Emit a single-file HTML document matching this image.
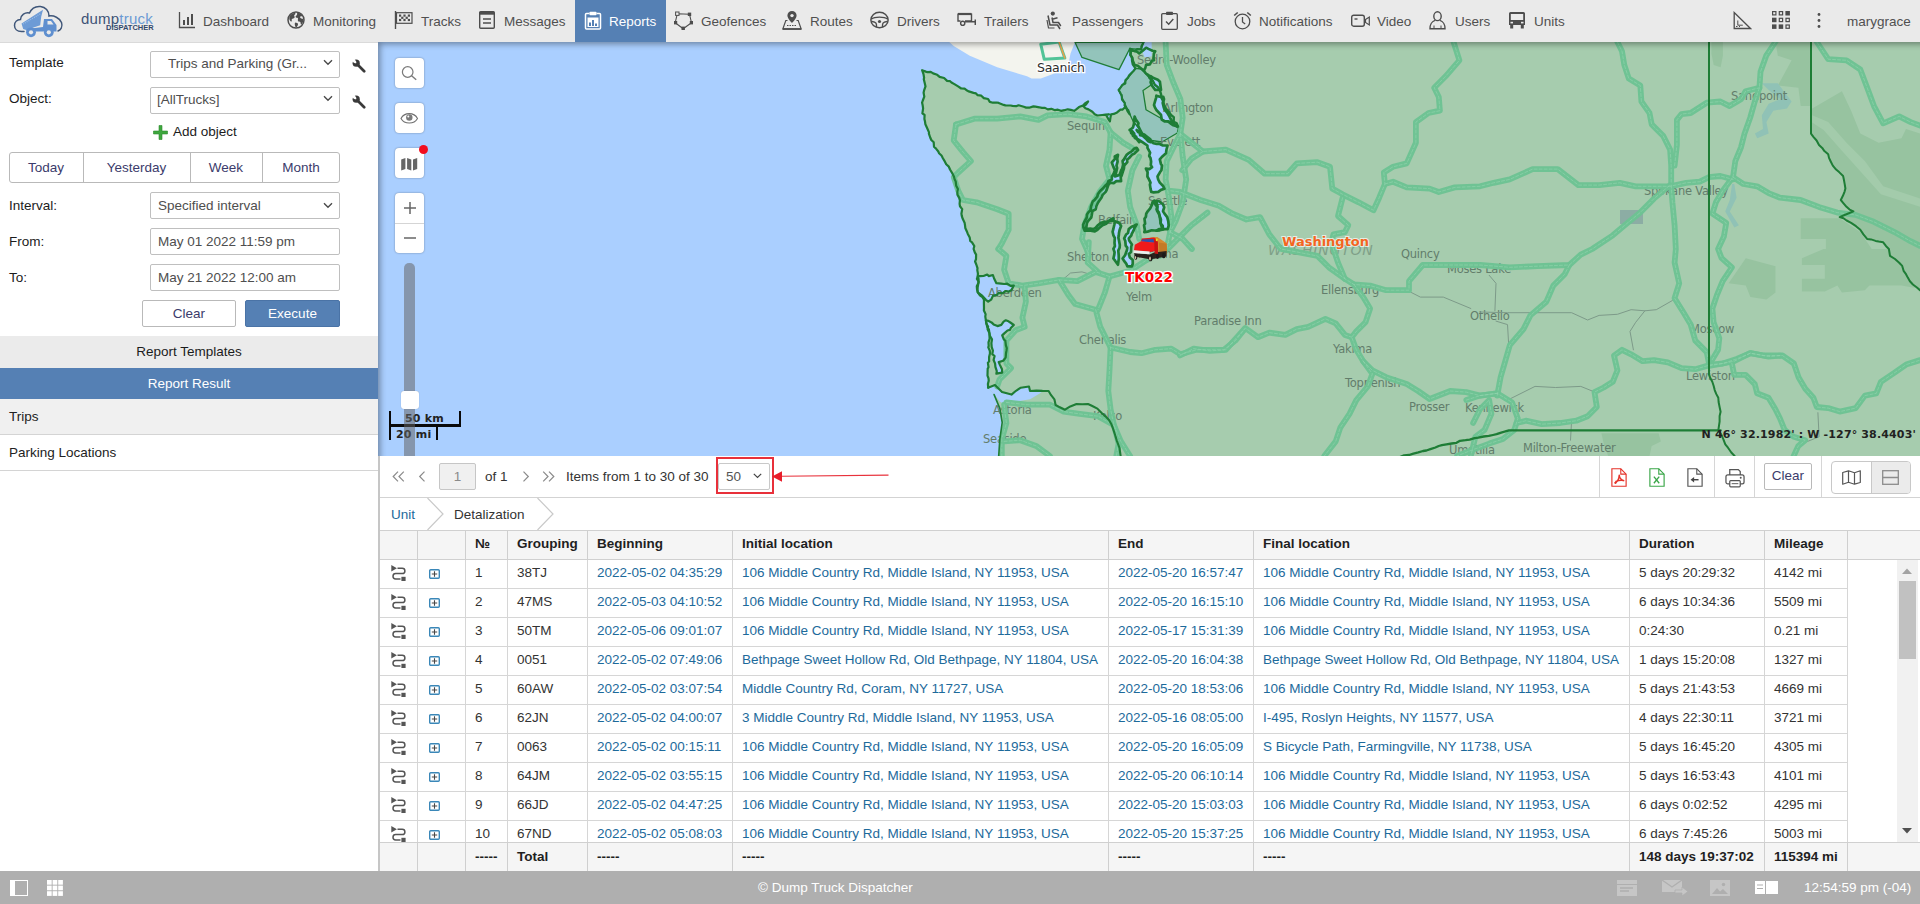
<!DOCTYPE html>
<html lang="en">
<head>
<meta charset="utf-8">
<title>Dump Truck Dispatcher</title>
<style>
*{box-sizing:border-box;margin:0;padding:0}
html,body{width:1920px;height:904px;overflow:hidden;background:#fff}
body{font-family:"Liberation Sans",sans-serif;font-size:13.5px;color:#252525;position:relative}
.a{position:absolute}
svg{display:block}
/* top nav */
#nav{position:absolute;left:0;top:0;width:1920px;height:42px;background:#eaeaea;z-index:20}
#nav .t{position:absolute;top:0;height:42px;line-height:43px;color:#505050;font-size:13.5px;white-space:nowrap}
#nav .i{position:absolute;top:11px}
#nav .act{position:absolute;left:575px;top:0;width:91px;height:42px;background:#5580b4}
/* left panel */
#left{position:absolute;left:0;top:42px;width:378px;height:829px;background:#fff;border-top:1px solid #dadada}
#vline{position:absolute;left:378px;top:456px;width:2px;height:415px;background:#c6c6c6;z-index:5}
.lbl{position:absolute;left:9px;font-size:13.5px;color:#1c1c1c;line-height:16px}
.sel{position:absolute;left:150px;width:190px;height:27px;border:1px solid #bfbfbf;border-radius:2px;background:#fff;font-size:13.5px;color:#4e4e4e;line-height:24px;white-space:nowrap;overflow:hidden}
.chev{position:absolute;left:172px;top:8px}
.btn{position:absolute;border:1px solid #b9b9b9;border-radius:2px;background:#fff;color:#3b3b6b;text-align:center;font-size:13.5px}
/* map */
#map{position:absolute;left:378px;top:42px;width:1542px;height:414px;background:#aacfff;overflow:hidden}
.mbtn{position:absolute;left:17px;width:29px;height:30px;background:#fff;border-radius:4px;box-shadow:0 0 2px rgba(0,0,0,.4)}
.ml{font-family:"DejaVu Sans","Liberation Sans",sans-serif;font-size:11.5px;letter-spacing:-.25px;fill:#627d6b}
/* toolbar */
#tb{position:absolute;left:379px;top:456px;width:1541px;height:42px;background:#fff;border-bottom:1px solid #d3d3d3}
#tb .v{position:absolute;top:0;width:1px;height:41px;background:#d6d6d6}
#tb .t{position:absolute;top:0;line-height:42px;color:#333;white-space:nowrap}
/* breadcrumb */
#crumb{position:absolute;left:379px;top:498px;width:1541px;height:32px;background:#fff}
/* table */
#grid{position:absolute;left:379px;top:530px;width:1541px;height:341px;overflow:hidden;background:#fff}
.r{position:absolute;left:0;width:1469px;height:29px;border-bottom:1px solid #d6d6d6;border-left:1px solid #d6d6d6}
.c{position:absolute;top:0;height:29px;border-right:1px solid #d6d6d6;line-height:26px;white-space:nowrap;overflow:hidden;font-size:13.5px;color:#333;padding-left:9px}
.lk{color:#1d6a9b}
.hd{position:absolute;left:0;top:0;width:1541px;height:30px;background:#f5f5f5;border-top:1px solid #d0d0d0;border-bottom:1px solid #d0d0d0;border-left:1px solid #d0d0d0}
.hd .c,.ft .c{font-weight:bold;color:#1f1f1f;height:28px;line-height:27px;border-right:1px solid #cfcfcf}
.hd .c{line-height:26px;height:28px}
.ft{position:absolute;left:0;top:312px;width:1541px;height:29px;background:#f5f5f5;border-top:1px solid #d0d0d0;border-left:1px solid #d0d0d0}
#foot{position:absolute;left:0;top:871px;width:1920px;height:33px;background:#afafaf;color:#fff;font-size:13.5px}
</style>
</head>
<body>
<div id="nav"><div class="act"></div>
<svg class="a" style="left:13px;top:4px" width="52" height="36" viewBox="13 4 52 36">
<path d="M24 31.500h-2.500c-4.500 0-7-2.800-7-6 0-3.300 2.500-5.800 6-6 .3-4.500 4.500-7.500 9-6.500 2-4.500 6-7 11-6.500 5 .6 8.500 4.500 8.500 9.500 5-.8 10.500 2 12.500 6.500 1.500 4.500-1 7.500-3.500 8.500" fill="none" stroke="#3f5679" stroke-width="1.500" stroke-linecap="round"/>
<path d="M21.500 23.500L43 9.800l-1.800 7-1 8.500-14 4.700-3-1z" fill="#6d9bd6"/>
<path d="M23 24l18-10.500" stroke="#9bbce6" stroke-width="1.300" stroke-dasharray="1 1.100"/>
<path d="M44 19h8l4.500 6v6.500H26.500v-2.500L43 27z" fill="#5f8fcf"/>
<path d="M47.500 21h3.500l2.500 3.500h-6z" fill="#eaeaea"/>
<circle cx="31" cy="32.300" r="4.900" fill="#5f8fcf"/><circle cx="31" cy="32.300" r="2.100" fill="#eaeaea"/>
<circle cx="48.800" cy="32.300" r="4.900" fill="#5f8fcf"/><circle cx="48.800" cy="32.300" r="2.100" fill="#eaeaea"/>
</svg>
<div class="a" style="left:81px;top:9px;font-size:15px;line-height:20px;letter-spacing:.2px;color:#3e5377">dump<span style="color:#6a9ad4">truck</span></div>
<div class="a" style="left:106px;top:24px;font-size:7.500px;line-height:8px;font-weight:bold;color:#33486b">DISPATCHER</div>
<div class="i" style="left:178px;top:11px"><svg width="18" height="18" viewBox="0 0 18 18"><path d="M1.5 1v15.5H17" fill="none" stroke="#4d4d4d" stroke-width="1.3"/><rect x="5" y="9" width="2" height="5" fill="#4d4d4d"/><rect x="9" y="6" width="2" height="8" fill="#4d4d4d"/><rect x="13" y="3" width="2" height="11" fill="#4d4d4d"/></svg></div><div class="t" style="left:203px">Dashboard</div>
<div class="i" style="left:287px;top:11px"><svg width="18" height="18" viewBox="0 0 18 18"><circle cx="9" cy="9" r="8" fill="none" stroke="#4d4d4d" stroke-width="1.500"/><path d="M2.500 5.500C3.500 3.500 5.500 2 8 1.800c.8.700.3 1.700-.7 2.200-.5 1 .8 1.500.2 2.700-.7 1-2 .6-2.700 1.500-.5.900.6 1.800-.3 2.300C3 10.500 1.800 8 2.500 5.500zM10.500 1.500c2 .3 4 1.700 5 3.700-.800.300-1.700-.200-2.300.500-.500.800.500 1.500 1.200 1.800.800.300 1.700 0 2 .800.200 2-.700 4-2.200 5.400-.800-.600-.300-1.800-.900-2.600-.600-.700-1.800-.400-2.300-1.200-.500-1 .500-2-.200-2.800-.600-.700-1.800-.300-2.200-1.200-.300-1.200 1.200-1.500 1.500-2.500.200-.700-.300-1.300.400-1.900zM8.500 11.500c1 .200 2.300.500 2.500 1.500.200 1.200-.800 2.200-1.500 3.200-1 .200-1.300-1-1.500-1.800-.300-1-.500-2.200.500-2.900z" fill="#4d4d4d"/></svg></div><div class="t" style="left:313px">Monitoring</div>
<div class="i" style="left:394px;top:11px"><svg width="19" height="18" viewBox="0 0 19 18"><path d="M1.500 0v18" stroke="#4d4d4d" stroke-width="1.400"/><rect x="2.500" y="1.700" width="15.500" height="10.600" fill="none" stroke="#4d4d4d" stroke-width="1.200"/><g fill="#4d4d4d"><rect x="5" y="3.500" width="2.200" height="2.200"/><rect x="9.400" y="3.500" width="2.200" height="2.200"/><rect x="13.800" y="3.500" width="2.200" height="2.200"/><rect x="7.200" y="5.700" width="2.200" height="2.200"/><rect x="11.600" y="5.700" width="2.200" height="2.200"/><rect x="5" y="7.900" width="2.200" height="2.200"/><rect x="9.400" y="7.900" width="2.200" height="2.200"/><rect x="13.800" y="7.900" width="2.200" height="2.200"/></g></svg></div><div class="t" style="left:421px">Tracks</div>
<div class="i" style="left:479px;top:11px"><svg width="16" height="18" viewBox="0 0 16 18"><rect x=".7" y=".7" width="14.600" height="16.600" rx="1" fill="none" stroke="#4d4d4d" stroke-width="1.400"/><rect x=".7" y=".7" width="14.600" height="3" fill="#4d4d4d"/><path d="M4 8h8M4 12h8" stroke="#4d4d4d" stroke-width="1.300"/></svg></div><div class="t" style="left:504px">Messages</div>
<div class="i" style="left:584px;top:11px"><svg width="18" height="19" viewBox="0 0 18 19"><path d="M5.500 2.500h-3a1 1 0 0 0-1 1v13.500a1 1 0 0 0 1 1h13a1 1 0 0 0 1-1V3.500a1 1 0 0 0-1-1h-3" fill="none" stroke="#fff" stroke-width="1.500"/><rect x="5.500" y=".7" width="7" height="3.600" rx=".8" fill="#fff"/><rect x="3.500" y="6.500" width="11" height="9.500" fill="#fff"/><rect x="5" y="11.500" width="2" height="3.500" fill="#5580b4"/><rect x="8" y="9" width="2" height="6" fill="#5580b4"/><rect x="11" y="12.500" width="2" height="2.500" fill="#5580b4"/></svg></div><div class="t" style="left:609px;color:#fff">Reports</div>
<div class="i" style="left:674px;top:11px"><svg width="19" height="19" viewBox="0 0 19 19"><path d="M3.300 2.700L15.500 3.300l2 8.400-8.300 6-8-6z" fill="none" stroke="#4d4d4d" stroke-width="1.100"/><g fill="#4d4d4d"><rect x="13.800" y="1.600" width="3.400" height="3.400"/><rect x="15.800" y="10" width="3.200" height="3.400"/><rect x="7.500" y="15.600" width="3.400" height="3.400"/><rect x="0" y="10" width="3.200" height="3.400"/></g><rect x="1.600" y="1" width="3.400" height="3.400" fill="#eaeaea" stroke="#4d4d4d" stroke-width="1"/></svg></div><div class="t" style="left:701px">Geofences</div>
<div class="i" style="left:782px;top:11px"><svg width="20" height="19" viewBox="0 0 20 19"><path d="M10 0a4.600 4.600 0 0 0-4.600 4.600c0 3.200 4.600 7.400 4.600 7.400s4.600-4.200 4.600-7.400A4.600 4.600 0 0 0 10 0z" fill="#4d4d4d"/><circle cx="10" cy="4.600" r="1.700" fill="#eaeaea"/><path d="M5.500 9.500H3.800L.8 18h18.400l-3-8.500h-1.700" fill="none" stroke="#4d4d4d" stroke-width="1.200"/><path d="M.8 18h18.400" stroke="#4d4d4d" stroke-width="1.800"/><path d="M5 14.500h10" stroke="#4d4d4d" stroke-width="1" stroke-dasharray="1.500 1"/></svg></div><div class="t" style="left:810px">Routes</div>
<div class="i" style="left:870px;top:11px"><svg width="19" height="18" viewBox="0 0 19 18"><ellipse cx="9.500" cy="9" rx="8.600" ry="7.800" fill="none" stroke="#4d4d4d" stroke-width="1.500"/><path d="M1.500 8c3-2.500 13-2.500 16 0M6.500 16c0-3 .5-5-4.500-5.500M12.500 16c0-3-.5-5 4.500-5.500" fill="none" stroke="#4d4d4d" stroke-width="1.400"/><circle cx="9.500" cy="10.500" r="1.600" fill="#4d4d4d"/></svg></div><div class="t" style="left:897px">Drivers</div>
<div class="i" style="left:957px;top:11px"><svg width="19" height="18" viewBox="0 0 19 18"><path d="M1 3h13.500" stroke="#4d4d4d" stroke-width="2.200"/><path d="M1 2.500v7.500h2.500M8 10h6.500V2.500" fill="none" stroke="#4d4d4d" stroke-width="1.400"/><circle cx="5.700" cy="12.300" r="2.100" fill="none" stroke="#4d4d4d" stroke-width="1.400"/><path d="M8 10.700h10M18.300 8.500v5.500" stroke="#4d4d4d" stroke-width="1.500" fill="none"/></svg></div><div class="t" style="left:984px">Trailers</div>
<div class="i" style="left:1046px;top:11px"><svg width="18" height="19" viewBox="0 0 18 19"><circle cx="6.800" cy="2.600" r="2.100" fill="#4d4d4d"/><path d="M2 4.500l2 9.500h7.500l2.500 4M6 6.500l1 5h5.500l2.300 3.500" fill="none" stroke="#4d4d4d" stroke-width="1.500" stroke-linejoin="round"/><path d="M7 8l4.500-1.200" stroke="#4d4d4d" stroke-width="1.400"/><path d="M1 9l1.500 8h6" fill="none" stroke="#4d4d4d" stroke-width="1.200"/></svg></div><div class="t" style="left:1072px">Passengers</div>
<div class="i" style="left:1161px;top:11px"><svg width="17" height="19" viewBox="0 0 17 19"><path d="M5 2.700H1.700a1 1 0 0 0-1 1v13.600a1 1 0 0 0 1 1h13.600a1 1 0 0 0 1-1V3.700a1 1 0 0 0-1-1H12" fill="none" stroke="#4d4d4d" stroke-width="1.300"/><rect x="5" y=".8" width="7" height="3.200" rx=".7" fill="#4d4d4d"/><path d="M5 10.500l2.700 2.800 4.600-5.300" fill="none" stroke="#4d4d4d" stroke-width="1.400"/></svg></div><div class="t" style="left:1187px">Jobs</div>
<div class="i" style="left:1233px;top:11px"><svg width="19" height="19" viewBox="0 0 19 19"><circle cx="9.500" cy="10.500" r="7.300" fill="none" stroke="#4d4d4d" stroke-width="1.300"/><path d="M9.500 6v5l2.700 2" fill="none" stroke="#4d4d4d" stroke-width="1.300"/><path d="M1.200 4.500L4.700 1.500M17.800 4.500L14.300 1.500" stroke="#4d4d4d" stroke-width="1.600"/></svg></div><div class="t" style="left:1259px">Notifications</div>
<div class="i" style="left:1351px;top:14px"><svg width="19" height="14" viewBox="0 0 19 14"><rect x=".7" y="1.200" width="12.600" height="11" rx="2" fill="none" stroke="#4d4d4d" stroke-width="1.400"/><path d="M14.500 5.500l3.800-2.500v8l-3.800-2.500z" fill="none" stroke="#4d4d4d" stroke-width="1.200"/><path d="M3.500 5h3" stroke="#4d4d4d" stroke-width="1.400"/></svg></div><div class="t" style="left:1377px">Video</div>
<div class="i" style="left:1429px;top:11px"><svg width="17" height="19" viewBox="0 0 17 19"><ellipse cx="8.500" cy="5.200" rx="3.700" ry="4.400" fill="none" stroke="#4d4d4d" stroke-width="1.400"/><path d="M6 9.300C3 10.500 1 12 1 17.800h15c0-5.800-2-7.300-5-8.500" fill="none" stroke="#4d4d4d" stroke-width="1.400"/><path d="M5 18v-3.500M12 18v-3.500" stroke="#4d4d4d" stroke-width="1"/></svg></div><div class="t" style="left:1455px">Users</div>
<div class="i" style="left:1508px;top:11px"><svg width="18" height="18" viewBox="0 0 18 18"><path d="M2.500 1h13a1.500 1.500 0 0 1 1.500 1.500V14H1V2.500A1.500 1.500 0 0 1 2.500 1z" fill="#4d4d4d"/><rect x="2.800" y="3" width="12.400" height="6" fill="#eaeaea"/><rect x="2.200" y="14" width="3" height="3.500" fill="#4d4d4d"/><rect x="12.800" y="14" width="3" height="3.500" fill="#4d4d4d"/><rect x="2.500" y="10.800" width="2.500" height="1.600" fill="#eaeaea"/><rect x="13" y="10.800" width="2.500" height="1.600" fill="#eaeaea"/></svg></div><div class="t" style="left:1534px">Units</div>
<div class="i" style="left:1733px;top:11px"><svg width="19" height="19" viewBox="0 0 19 19"><path d="M1.200 1.500v16h16.300z" fill="none" stroke="#4d4d4d" stroke-width="1.300"/><path d="M4.800 9.500v4.700h5" fill="none" stroke="#4d4d4d" stroke-width="1"/><path d="M3 15.500h1.500M6 15.500h1" stroke="#4d4d4d" stroke-width="1"/></svg></div>
<div class="i" style="left:1772px;top:11px"><svg width="18" height="18" viewBox="0 0 18 18"><rect x="0" y="0" width="4.500" height="4.500" fill="#4d4d4d"/><rect x="0" y="6.7" width="4.500" height="4.500" fill="#4d4d4d"/><rect x="0" y="13.4" width="4.500" height="4.500" fill="#4d4d4d"/><rect x="6.7" y="0" width="4.500" height="4.500" fill="#4d4d4d"/><rect x="6.7" y="6.7" width="4.500" height="4.500" fill="#4d4d4d"/><rect x="6.7" y="13.4" width="4.500" height="4.500" fill="#4d4d4d"/><rect x="13.4" y="0" width="4.500" height="4.500" fill="#4d4d4d"/><rect x="13.4" y="6.7" width="4.500" height="4.500" fill="#4d4d4d"/><rect x="13.4" y="13.4" width="4.500" height="4.500" fill="#4d4d4d"/><rect x="1.2" y="1.2" width="2.100" height="2.100" fill="#eaeaea"/><rect x="7.9" y="1.2" width="2.100" height="2.100" fill="#eaeaea"/><rect x="7.9" y="7.9" width="2.100" height="2.100" fill="#eaeaea"/><rect x="14.6" y="7.9" width="2.100" height="2.100" fill="#eaeaea"/><rect x="14.6" y="14.6" width="2.100" height="2.100" fill="#eaeaea"/></svg></div>
<div class="i" style="left:1817px;top:12px"><svg width="4" height="18" viewBox="0 0 4 18"><circle cx="2" cy="2.500" r="1.400" fill="#4d4d4d"/><circle cx="2" cy="8.500" r="1.400" fill="#4d4d4d"/><circle cx="2" cy="14.500" r="1.400" fill="#4d4d4d"/></svg></div>
<div class="t" style="left:1847px">marygrace</div>
</div>
<div id="left">
<div class="lbl" style="top:12px">Template</div>
<div class="sel" style="top:8px;padding-left:17px">Trips and Parking (Gr...<svg class="chev" style="top:7px" width="10" height="7" viewBox="0 0 10 7"><path d="M1 1.200l4 4 4-4" fill="none" stroke="#4a4a4a" stroke-width="1.400"/></svg></div>
<div class="a" style="left:352px;top:16px"><svg width="14" height="14" viewBox="0 0 14 14"><path d="M4.500 4.500l7.700 7.700" stroke="#3a3a3a" stroke-width="2.700" stroke-linecap="round"/><circle cx="4.200" cy="4.200" r="3.600" fill="#3a3a3a"/><path d="M4.300 4.300L-1 2.200V-1h3.200z" fill="#fff"/><path d="M3.300 1.200l1.200 2.100-1.100 1.200-2.200-1.200" fill="#fff"/></svg></div>
<div class="lbl" style="top:48px">Object:</div>
<div class="sel" style="top:44px;padding-left:6px">[AllTrucks]<svg class="chev" style="top:7px" width="10" height="7" viewBox="0 0 10 7"><path d="M1 1.200l4 4 4-4" fill="none" stroke="#4a4a4a" stroke-width="1.400"/></svg></div>
<div class="a" style="left:352px;top:52px"><svg width="14" height="14" viewBox="0 0 14 14"><path d="M4.500 4.500l7.700 7.700" stroke="#3a3a3a" stroke-width="2.700" stroke-linecap="round"/><circle cx="4.200" cy="4.200" r="3.600" fill="#3a3a3a"/><path d="M4.300 4.300L-1 2.200V-1h3.200z" fill="#fff"/><path d="M3.300 1.200l1.200 2.100-1.100 1.200-2.200-1.200" fill="#fff"/></svg></div>
<svg class="a" style="left:153px;top:82px" width="15" height="15" viewBox="0 0 15 15"><path d="M6 .5h3v5.500h5.500v3H9v5.500H6V9H.5V6H6z" fill="#3ea73e" stroke="#2d8a2d" stroke-width=".6"/></svg>
<div class="a" style="left:173px;top:81px;line-height:16px;color:#1c1c1c">Add object</div>
<div class="btn" style="left:9px;top:109px;width:331px;height:31px;border-radius:3px"></div>
<div class="a" style="left:9px;top:109px;width:74px;height:31px;line-height:31px;text-align:center;color:#3b3b6b">Today</div>
<div class="a" style="left:83px;top:109px;width:107px;height:31px;line-height:31px;text-align:center;color:#3b3b6b">Yesterday</div>
<div class="a" style="left:190px;top:109px;width:72px;height:31px;line-height:31px;text-align:center;color:#3b3b6b">Week</div>
<div class="a" style="left:262px;top:109px;width:78px;height:31px;line-height:31px;text-align:center;color:#3b3b6b">Month</div>
<div class="a" style="left:83px;top:110px;width:1px;height:29px;background:#b9b9b9"></div>
<div class="a" style="left:190px;top:110px;width:1px;height:29px;background:#b9b9b9"></div>
<div class="a" style="left:262px;top:110px;width:1px;height:29px;background:#b9b9b9"></div>
<div class="lbl" style="top:155px">Interval:</div>
<div class="sel" style="top:149px;padding-left:7px;line-height:25px">Specified interval<svg class="chev" style="top:8.5px" width="10" height="7" viewBox="0 0 10 7"><path d="M1 1.200l4 4 4-4" fill="none" stroke="#4a4a4a" stroke-width="1.400"/></svg></div>
<div class="lbl" style="top:191px">From:</div>
<div class="sel" style="top:185px;padding-left:7px;line-height:25px">May 01 2022 11:59 pm</div>
<div class="lbl" style="top:227px">To:</div>
<div class="sel" style="top:221px;padding-left:7px;line-height:25px">May 21 2022 12:00 am</div>
<div class="btn" style="left:142px;top:257px;width:94px;height:27px;line-height:25px">Clear</div>
<div class="btn" style="left:245px;top:257px;width:95px;height:27px;line-height:25px;background:#5580b4;border-color:#4a73a6;color:#fff">Execute</div>
<div class="a" style="left:0;top:293px;width:378px;height:32px;line-height:31px;background:#ebebeb;text-align:center;color:#1c1c1c">Report Templates</div>
<div class="a" style="left:0;top:325px;width:378px;height:31px;line-height:31px;background:#5580b4;text-align:center;color:#fff">Report Result</div>
<div class="a" style="left:0;top:356px;width:378px;height:36px;line-height:36px;background:#f0f0f0;border-bottom:1px solid #d4d4d4;padding-left:9px;color:#222">Trips</div>
<div class="a" style="left:0;top:392px;width:378px;height:36px;line-height:36px;background:#fff;border-bottom:1px solid #d4d4d4;padding-left:9px;color:#222">Parking Locations</div>
</div>
<div id="vline"></div>
<div id="map"><svg class="a" style="left:0;top:0" width="1542" height="414" viewBox="378 42 1542 414"><polygon points="949.2,42.0 953.7,46.1 969.8,55.7 997.2,67.2 1027.0,76.3 1031.6,78.6 1040.8,78.6 1059.1,71.8 1068.2,64.9 1070.5,53.4 1075.1,42.0" fill="#f3f4ee" stroke="none" stroke-width="0" stroke-linejoin="round"/><polygon points="922.1,70.2 937.2,74.8 958.1,86.4 981.3,95.7 992.9,102.7 1016.1,106.2 1039.3,107.3 1057.9,109.7 1074.2,110.8 1088.1,101.5 1083.5,106.2 1097.4,115.5 1109.0,114.3 1106.4,115.5 1109.9,121.3 1111.1,114.3 1125.0,107.3 1129.7,114.3 1118.6,89.9 1135.5,68.4 1132.0,60.9 1130.8,50.4 1141.3,49.3 1143.6,42.3 1143.6,42.0 1920.0,42.0 1920.0,456.0 998.5,456.0 998.7,455.9 999.9,438.8 1002.2,422.5 999.9,408.6 994.1,394.6 988.2,387.7 989.4,333.1 985.9,320.3 982.4,297.1 977.8,292.4 977.8,276.2 974.3,246.0 969.7,237.4 962.7,218.8 959.2,197.9 954.6,179.3 948.8,166.6 938.3,151.5 930.2,137.5 924.4,119.0 922.1,102.7 925.5,86.4 922.1,70.2" fill="#a6ccae" stroke="none" stroke-width="0" stroke-linejoin="round"/><polygon points="1775.5,42.0 1809.9,42.0 1809.9,106.1 1800.7,106.1 1798.4,87.8 1777.8,85.5 1791.6,60.3 1777.8,55.7" fill="#97c3a0" stroke="none" stroke-width="0" stroke-linejoin="round"/><polygon points="1812.2,108.4 1841.9,91.2 1851.1,110.7 1860.3,133.6 1878.6,142.7 1901.5,138.2 1906.0,129.0 1920.0,133.6 1931.2,133.6 1931.2,249.0 1890.0,249.0 1883.2,242.3 1867.1,238.9 1860.3,229.7 1851.1,222.9 1839.7,217.1 1853.4,211.4 1846.5,206.8 1840.8,200.0 1845.4,188.5 1843.1,175.9 1832.8,165.6 1828.2,154.2 1819.0,145.0 1811.0,133.6 1811.0,110.7" fill="#97c3a0" stroke="none" stroke-width="0" stroke-linejoin="round"/><polygon points="1800.7,218.3 1839.7,218.3 1860.3,232.0 1871.7,249.0 1825.9,249.0 1825.9,238.9 1800.7,238.9" fill="#97c3a0" stroke="none" stroke-width="0" stroke-linejoin="round"/><polygon points="1711.4,42.0 1722.9,42.0 1722.9,55.7 1720.6,67.2 1713.7,64.9 1711.4,53.4" fill="#97c3a0" stroke="none" stroke-width="0" stroke-linejoin="round"/><polygon points="1728.6,283.3 1745.8,258.2 1775.5,266.2 1775.5,292.5 1766.4,299.4 1750.4,297.1 1745.8,285.6" fill="#97c3a0" stroke="none" stroke-width="0" stroke-linejoin="round"/><polygon points="1801.9,258.2 1823.6,249.0 1890.0,249.0 1906.0,274.2 1915.2,287.9 1901.5,285.6 1869.4,285.6 1864.8,290.2 1841.9,292.5 1837.4,285.6 1824.8,291.4 1801.9,291.4 1801.9,278.8 1824.8,278.8 1824.8,265.0 1801.9,265.0" fill="#97c3a0" stroke="none" stroke-width="0" stroke-linejoin="round"/><polygon points="1886.6,249.0 1890.0,255.9 1899.2,262.7 1906.0,274.2 1912.9,284.5 1931.2,294.8 1931.2,249.0" fill="#97c3a0" stroke="none" stroke-width="0" stroke-linejoin="round"/><polygon points="1601.4,433.3 1658.6,433.3 1660.9,441.4 1651.7,445.9 1649.5,456.0 1608.2,456.0 1603.7,443.6" fill="#97c3a0" stroke="none" stroke-width="0" stroke-linejoin="round"/><polygon points="1812.2,115.3 1828.2,122.1 1846.5,142.7 1864.8,161.0 1883.2,186.2 1931.2,202.3 1931.2,210.3 1880.9,194.2 1860.3,171.3 1841.9,150.7 1823.6,130.1 1812.2,122.6" fill="#a3cbab" stroke="none" stroke-width="0" stroke-linejoin="round"/><polygon points="1761.8,83.2 1777.8,83.2 1791.6,101.5 1787.0,108.4 1773.3,110.7 1766.4,122.1 1768.7,133.6 1757.2,138.2 1754.9,133.6 1763.0,129.0 1761.8,115.3 1768.7,103.8 1780.1,99.2 1768.7,90.1" fill="#90c2b6" stroke="none" stroke-width="0" stroke-linejoin="round"/><polygon points="1734.3,183.9 1736.6,197.7 1729.8,211.4 1738.9,225.2 1734.3,227.4 1725.2,211.4 1729.8,200.0 1732.1,183.9" fill="#90c2b6" stroke="none" stroke-width="0" stroke-linejoin="round"/><rect x="1620" y="210" width="23" height="14" fill="#8cada4"/><polygon points="977.8,276.2 992.9,275.0 996.4,283.2 1013.8,285.5 1011.5,290.1 992.9,295.9 988.2,301.7 982.4,295.9 977.8,292.4" fill="#aacfff" stroke="none" stroke-width="0" stroke-linejoin="round"/><polygon points="985.9,320.3 997.5,326.1 1005.7,320.3 1013.8,325.0 1002.2,335.4 1006.8,348.2 1005.7,357.5 998.7,362.1 1002.2,372.6 996.4,373.7 992.9,350.5 989.4,333.1" fill="#aacfff" stroke="none" stroke-width="0" stroke-linejoin="round"/><polygon points="988.2,387.7 995.2,385.3 1002.2,392.3 1011.5,394.6 1020.8,387.7 1028.9,386.5 1030.1,391.1 1041.7,392.3 1030.1,399.3 1016.1,401.6 1006.8,406.2 999.9,401.6 994.1,394.6" fill="#aacfff" stroke="none" stroke-width="0" stroke-linejoin="round"/><polygon points="1134.6,116.6 1131.1,132.9 1139.2,142.2 1129.6,130.0 1138.1,139.3 1142.8,142.4 1147.4,145.5 1150.5,157.9 1152.1,167.2 1145.9,168.7 1147.4,176.5 1150.5,182.6 1151.3,191.9 1158.3,191.9 1164.5,188.8 1159.8,182.6 1157.5,176.5 1161.4,170.3 1159.8,159.4 1166.0,153.2 1167.6,145.5 1162.9,145.5 1156.7,143.9 1144.3,134.6 1136.6,130.0 1150.8,142.2 1141.5,132.9" fill="#aacfff" stroke="none" stroke-width="0" stroke-linejoin="round"/><polygon points="1155.9,201.2 1159.8,216.7 1162.9,229.1 1156.7,230.7 1167.6,229.1 1168.3,221.4 1164.5,213.6 1162.9,204.3 1159.0,201.2" fill="#aacfff" stroke="none" stroke-width="0" stroke-linejoin="round"/><polygon points="1138.1,150.1 1131.9,154.8 1124.2,165.6 1121.1,181.1 1110.3,182.6 1105.6,191.9 1097.9,202.8 1091.7,215.2 1087.0,222.9 1085.5,229.1 1093.2,229.1 1101.0,222.9 1113.4,218.3 1113.4,220.6 1102.5,225.2 1094.8,231.4 1084.7,230.7 1083.2,224.5 1088.6,212.1 1094.8,199.7 1102.5,188.8 1111.8,179.6 1114.9,170.3 1111.8,162.5 1118.0,154.8 1116.5,165.6 1114.9,176.5 1119.6,174.9 1122.6,161.0 1128.8,153.2 1136.6,147.8" fill="#aacfff" stroke="none" stroke-width="0" stroke-linejoin="round"/><polygon points="1114.9,221.4 1113.4,235.3 1114.9,246.1 1113.4,258.5 1118.0,264.7 1119.6,247.7 1118.8,235.3 1121.1,226.0" fill="#aacfff" stroke="none" stroke-width="0" stroke-linejoin="round"/><polygon points="1136.6,224.5 1128.8,229.1 1124.2,238.4 1127.3,247.7 1122.6,258.5 1127.3,266.3 1131.9,266.3 1132.7,260.1 1128.8,253.9 1131.9,244.6 1128.8,238.4 1133.5,230.7" fill="#aacfff" stroke="none" stroke-width="0" stroke-linejoin="round"/><polygon points="1150.6,76.0 1159.9,81.8 1161.0,89.9 1155.2,89.9 1151.7,85.3" fill="#aacfff" stroke="none" stroke-width="0" stroke-linejoin="round"/><polygon points="1156.4,95.7 1163.3,96.9 1164.5,109.7 1177.3,125.9 1164.5,121.3 1154.0,105.0" fill="#aacfff" stroke="none" stroke-width="0" stroke-linejoin="round"/><polygon points="1143.6,42.3 1151.7,42.3 1151.7,56.3 1144.8,57.4 1141.3,49.3" fill="#aacfff" stroke="none" stroke-width="0" stroke-linejoin="round"/><polygon points="1154.4,200.5 1145.9,216.7 1144.3,232.2 1156.7,230.7 1162.9,229.1 1159.8,216.7" fill="#93c4bb" stroke="none" stroke-width="0" stroke-linejoin="round"/><polygon points="1075.0,42.3 1082.0,57.4 1119.0,69.6 1129.7,48.7 1141.3,49.3 1143.6,42.3" fill="#93c4bb" stroke="#1e7d36" stroke-width="1.3" stroke-linejoin="round"/><polygon points="1118.6,90.0 1135.5,68.4 1141.3,69.0 1154.0,83.0 1143.0,90.5 1146.0,109.7 1178.4,128.2 1177.3,133.0 1162.0,142.0 1148.0,140.0 1133.0,121.0" fill="#93c4bb" stroke="#1e7d36" stroke-width="1.3" stroke-linejoin="round"/><text class="ml" x="1037" y="72" style="fill:#2d2d2d;font-size:12.5px;paint-order:stroke;stroke:#fff;stroke-width:2.5px">Saanich</text><text class="ml" x="1137" y="64">Sedro-Woolley</text><text class="ml" x="1163" y="112">Arlington</text><text class="ml" x="1067" y="130">Sequim</text><text class="ml" x="1160" y="146">Everett</text><text class="ml" x="1148" y="205">Seattle</text><text class="ml" x="1098" y="224">Belfair</text><text class="ml" x="1067" y="261">Shelton</text><text class="ml" x="1136" y="258">Tacoma</text><text class="ml" x="1126" y="301">Yelm</text><text class="ml" x="988" y="297">Aberdeen</text><text class="ml" x="1079" y="344">Chenalis</text><text class="ml" x="1194" y="325">Paradise Inn</text><text class="ml" x="1321" y="294">Ellensburg</text><text class="ml" x="1333" y="353">Yakima</text><text class="ml" x="1345" y="387">Toppenish</text><text class="ml" x="1401" y="258">Quincy</text><text class="ml" x="1447" y="273">Moses Lake</text><text class="ml" x="1470" y="320">Othello</text><text class="ml" x="1409" y="411">Prosser</text><text class="ml" x="1465" y="412">Kennewick</text><text class="ml" x="1449" y="454">Umatilla</text><text class="ml" x="1523" y="452">Milton-Freewater</text><text class="ml" x="1644" y="195">Spokane Valley</text><text class="ml" x="1731" y="100">Sandpoint</text><text class="ml" x="1690" y="333">Moscow</text><text class="ml" x="1686" y="380">Lewiston</text><text class="ml" x="993" y="414">Astoria</text><text class="ml" x="983" y="443">Seaside</text><text class="ml" x="1093" y="420">Kelso</text><text x="1268" y="255" style="font-family:'DejaVu Sans',sans-serif;font-style:italic;font-size:14px;fill:#7fa088;letter-spacing:.8px">WASHINGTON</text><polyline points="1411.3,292.5 1420.4,297.1 1443.3,297.1 1470.8,308.5" fill="none" stroke="#7d9a89" stroke-width="1" stroke-linejoin="round" stroke-linecap="round" /><polyline points="1480.0,312.0 1507.5,312.7 1571.6,312.7 1587.6,320.0 1599.1,315.4 1617.4,314.3 1631.1,309.7 1644.9,310.8 1656.3,309.7 1672.4,300.5" fill="none" stroke="#7d9a89" stroke-width="1" stroke-linejoin="round" stroke-linecap="round" /><polyline points="1644.9,310.8 1635.7,322.3 1630.0,331.4 1633.4,349.8" fill="none" stroke="#7d9a89" stroke-width="1" stroke-linejoin="round" stroke-linecap="round" /><polyline points="1509.8,399.0 1535.0,386.4 1555.6,387.5 1580.8,386.4 1592.2,391.0" fill="none" stroke="#7d9a89" stroke-width="1" stroke-linejoin="round" stroke-linecap="round" /><polyline points="1489.2,275.3 1496.0,283.3 1494.9,310.8" fill="none" stroke="#7d9a89" stroke-width="1" stroke-linejoin="round" stroke-linecap="round" /><polyline points="1496.0,321.1 1507.5,324.6 1508.6,342.9" fill="none" stroke="#7d9a89" stroke-width="1" stroke-linejoin="round" stroke-linecap="round" /><polyline points="1571.6,420.7 1570.5,440.2" fill="none" stroke="#7d9a89" stroke-width="1" stroke-linejoin="round" stroke-linecap="round" /><polyline points="1817.9,412.7 1819.1,436.8 1807.6,441.4" fill="none" stroke="#7d9a89" stroke-width="1" stroke-linejoin="round" stroke-linecap="round" /><polyline points="1063.7,278.8 1070.5,273.0 1082.0,271.9 1093.4,275.3" fill="none" stroke="#7d9a89" stroke-width="1" stroke-linejoin="round" stroke-linecap="round" /><polyline points="1180.0,133.6 1202.9,151.5 1225.8,149.6 1248.7,159.9 1264.7,173.7 1287.6,173.7 1296.8,163.4 1317.4,162.2 1330.0,166.8 1332.3,188.6 1342.6,194.3 1358.6,202.3 1373.5,210.3 1379.2,197.7 1384.9,184.0 1383.8,172.5 1393.0,166.8 1406.7,163.4 1415.9,142.8 1415.9,122.1 1428.5,113.0 1439.9,110.7 1438.8,97.0 1434.2,87.8 1445.6,76.3 1459.4,60.3 1453.6,42.0" fill="none" stroke="#6dc293" stroke-width="5.8" stroke-linejoin="round" stroke-linecap="round" opacity=".97"/><polyline points="1384.9,184.0 1393.0,181.7 1406.7,187.4 1429.6,188.6 1438.8,192.0 1454.8,187.4 1480.0,186.3 1493.7,182.8 1509.7,179.4 1532.6,169.1 1557.8,169.1 1578.4,185.1 1599.1,185.1 1619.7,182.8 1635.7,186.3 1654.0,186.3 1670.0,186.3 1686.1,182.8 1699.8,181.7 1709.0,177.1 1720.4,176.0 1733.0,179.4" fill="none" stroke="#6dc293" stroke-width="5.8" stroke-linejoin="round" stroke-linecap="round" opacity=".97"/><polyline points="1342.6,197.7 1338.0,216.0 1348.3,225.2 1344.9,232.1 1333.4,234.4 1331.6,241.7 1333.4,249.0" fill="none" stroke="#6dc293" stroke-width="5.8" stroke-linejoin="round" stroke-linecap="round" opacity=".97"/><polyline points="1170.8,190.8 1180.0,192.0 1200.6,200.0 1218.9,205.7 1232.7,213.7 1246.4,219.5 1260.1,217.2 1269.3,234.4 1280.8,249.0 1299.1,252.4 1317.4,255.9 1328.8,267.3 1344.9,278.8 1354.0,284.5 1370.1,285.6 1386.1,290.2 1409.0,290.2 1409.0,281.1 1422.7,265.0 1480.0,265.0 1509.7,267.3 1537.2,266.2 1569.3,265.0 1580.7,254.7 1592.2,249.0 1612.8,235.3 1626.5,223.8 1640.3,212.4 1654.0,198.6 1670.0,185.1" fill="none" stroke="#6dc293" stroke-width="5.8" stroke-linejoin="round" stroke-linecap="round" opacity=".97"/><polyline points="1168.6,248.1 1180.0,236.6 1191.4,225.2 1207.5,212.6" fill="none" stroke="#6dc293" stroke-width="5.8" stroke-linejoin="round" stroke-linecap="round" opacity=".97"/><polyline points="1182.3,170.2 1191.4,158.8 1202.9,151.5" fill="none" stroke="#6dc293" stroke-width="5.8" stroke-linejoin="round" stroke-linecap="round" opacity=".97"/><polyline points="1333.4,249.0 1338.0,262.7 1344.9,278.8" fill="none" stroke="#6dc293" stroke-width="5.8" stroke-linejoin="round" stroke-linecap="round" opacity=".97"/><polyline points="1354.0,284.5 1363.2,297.1 1370.1,308.5 1365.5,322.3 1356.3,331.4 1351.7,337.2 1356.3,349.8 1363.2,361.2 1372.4,370.4 1386.1,377.2 1406.7,384.1 1418.1,391.0 1429.6,399.0 1450.2,391.0 1466.2,392.1 1480.0,395.6 1497.2,393.3" fill="none" stroke="#6dc293" stroke-width="5.8" stroke-linejoin="round" stroke-linecap="round" opacity=".97"/><polyline points="1180.0,355.5 1193.7,348.6 1209.8,350.9 1225.8,349.8 1235.0,339.5 1245.3,328.0 1257.9,337.2 1269.3,332.6 1285.3,334.9 1296.8,329.1 1308.2,326.9 1325.4,318.8 1335.7,323.4 1344.9,334.9 1351.7,337.2" fill="none" stroke="#6dc293" stroke-width="5.8" stroke-linejoin="round" stroke-linecap="round" opacity=".97"/><polyline points="1363.2,361.2 1372.4,373.8 1367.8,386.4 1356.3,400.1 1349.5,413.9 1340.3,427.6 1335.7,441.4 1324.3,456.0" fill="none" stroke="#6dc293" stroke-width="5.8" stroke-linejoin="round" stroke-linecap="round" opacity=".97"/><polyline points="1617.4,42.0 1622.0,51.2 1624.3,64.9 1628.8,78.6 1640.3,85.5 1641.4,101.5 1649.5,113.0 1651.7,124.4 1663.2,135.9 1670.1,149.6 1671.2,165.7 1671.2,184.0" fill="none" stroke="#6dc293" stroke-width="5.8" stroke-linejoin="round" stroke-linecap="round" opacity=".97"/><polyline points="1674.6,165.7 1676.9,145.0 1676.9,119.9 1681.5,114.1 1690.7,113.0 1706.7,102.7 1720.4,101.5 1729.6,106.1 1741.0,99.2 1745.6,91.2 1759.4,87.8" fill="none" stroke="#6dc293" stroke-width="5.8" stroke-linejoin="round" stroke-linecap="round" opacity=".97"/><polyline points="1775.4,42.0 1766.2,55.7 1760.5,71.8 1759.4,87.8 1754.8,101.5 1750.2,117.6 1744.5,133.6 1741.0,147.3 1735.3,161.1 1733.0,177.1 1722.7,190.8 1715.9,202.3 1712.4,213.7 1726.2,222.9 1723.9,236.6 1718.1,249.0 1721.6,258.2 1731.9,267.3 1722.7,281.1 1717.0,294.8 1712.4,308.5 1713.6,322.3 1719.3,338.3 1718.1,349.8 1711.3,361.2" fill="none" stroke="#6dc293" stroke-width="5.8" stroke-linejoin="round" stroke-linecap="round" opacity=".97"/><polyline points="1733.0,177.1 1743.3,184.0 1757.1,186.3 1768.5,193.1 1780.0,197.7 1800.6,200.0 1818.9,206.9 1837.2,212.6 1855.5,214.9 1873.9,221.8 1894.5,232.1 1910.5,241.2 1919.9,245.8" fill="none" stroke="#6dc293" stroke-width="5.8" stroke-linejoin="round" stroke-linecap="round" opacity=".97"/><polyline points="1671.2,185.1 1672.4,202.3 1674.6,225.2 1675.8,249.0 1674.6,262.7 1679.2,283.4 1674.6,298.2 1683.8,313.1 1690.7,324.6 1695.3,340.6 1706.7,352.1 1709.0,363.5" fill="none" stroke="#6dc293" stroke-width="5.8" stroke-linejoin="round" stroke-linecap="round" opacity=".97"/><polyline points="1569.3,265.0 1564.7,274.2 1553.3,285.6 1546.4,301.7 1530.4,315.4 1523.5,329.1 1509.8,345.2 1505.2,361.2 1500.6,377.2 1497.2,395.6" fill="none" stroke="#6dc293" stroke-width="5.8" stroke-linejoin="round" stroke-linecap="round" opacity=".97"/><polyline points="1780.0,355.5 1763.9,355.5 1750.2,353.2 1734.2,361.2 1722.7,363.5 1711.3,364.6 1695.3,369.2 1681.5,368.1 1667.8,362.4 1654.0,360.1 1642.6,361.2 1631.1,354.3 1622.0,349.8 1614.0,355.5 1617.4,370.4 1612.8,381.8 1603.7,387.5 1594.5,392.1 1596.8,407.0 1587.6,416.2 1576.2,420.7 1560.1,423.0 1541.8,424.2 1525.8,420.7 1516.6,423.0" fill="none" stroke="#6dc293" stroke-width="5.8" stroke-linejoin="round" stroke-linecap="round" opacity=".97"/><polyline points="1731.9,363.5 1734.2,374.9 1745.6,374.9 1754.8,384.1 1757.1,393.3 1768.5,397.8 1775.4,409.3 1780.0,418.5 1784.6,429.9 1793.7,436.8 1805.2,440.2 1798.3,445.9 1793.7,456.0" fill="none" stroke="#6dc293" stroke-width="5.8" stroke-linejoin="round" stroke-linecap="round" opacity=".97"/><polyline points="1466.3,400.1 1480.0,395.6 1497.2,393.3 1512.1,402.4 1517.8,418.5 1514.3,429.9 1502.9,439.1 1489.2,443.6 1470.8,450.5 1457.1,456.0" fill="none" stroke="#6dc293" stroke-width="5.8" stroke-linejoin="round" stroke-linecap="round" opacity=".97"/><polyline points="1473.1,423.0 1480.0,409.3 1489.2,400.1 1491.4,413.9 1484.6,429.9 1475.4,436.8 1470.8,456.0" fill="none" stroke="#6dc293" stroke-width="5.8" stroke-linejoin="round" stroke-linecap="round" opacity=".97"/><polyline points="1816.8,42.0 1828.2,59.2 1846.6,60.3 1860.3,69.5 1867.2,87.8 1874.0,106.1 1883.2,123.3 1899.2,116.4 1910.7,122.1 1920.1,125.6" fill="none" stroke="#6dc293" stroke-width="5.8" stroke-linejoin="round" stroke-linecap="round" opacity=".97"/><polyline points="1709.2,365.8 1722.9,363.5 1736.6,358.9 1750.4,353.2 1768.7,356.6 1782.4,355.5 1793.9,363.5 1798.5,377.2 1805.3,388.7 1813.4,397.8 1816.8,407.0 1828.2,408.1 1839.7,411.6 1855.7,408.1 1864.9,395.6 1876.3,393.3 1880.9,381.8 1894.6,372.7 1906.1,364.6 1920.1,360.1" fill="none" stroke="#6dc293" stroke-width="5.8" stroke-linejoin="round" stroke-linecap="round" opacity=".97"/><polyline points="998.4,249.0 1006.4,255.9 1004.1,269.6 1008.7,283.3 1022.4,285.6 1038.5,283.3 1059.1,279.9 1068.2,294.8 1075.1,304.0 1095.7,309.7 1100.3,326.9 1110.6,347.5 1109.5,370.4 1108.3,391.0 1110.6,409.3 1114.0,425.3 1120.9,441.4 1130.1,456.0" fill="none" stroke="#6dc293" stroke-width="5.8" stroke-linejoin="round" stroke-linecap="round" opacity=".97"/><polyline points="1059.1,279.9 1077.4,281.1 1095.7,271.9 1109.5,276.5 1130.1,270.8 1146.1,260.4 1157.5,253.6 1169.0,242.1" fill="none" stroke="#6dc293" stroke-width="5.8" stroke-linejoin="round" stroke-linecap="round" opacity=".97"/><polyline points="1109.5,276.5 1104.9,292.5 1098.0,309.7" fill="none" stroke="#6dc293" stroke-width="5.8" stroke-linejoin="round" stroke-linecap="round" opacity=".97"/><polyline points="1110.6,347.5 1130.1,352.0 1141.5,353.2 1155.3,349.8 1171.3,348.6 1180.4,354.3 1196.5,349.8 1223.9,349.8 1235.4,340.6 1244.6,329.1" fill="none" stroke="#6dc293" stroke-width="5.8" stroke-linejoin="round" stroke-linecap="round" opacity=".97"/><polyline points="1024.7,286.8 1025.9,301.7 1022.4,317.7 1024.7,326.9 1015.6,330.3 1006.4,340.6 1006.4,363.5 1011.0,368.1 999.5,379.5 997.2,386.4" fill="none" stroke="#6dc293" stroke-width="5.8" stroke-linejoin="round" stroke-linecap="round" opacity=".97"/><polyline points="1006.4,402.4 1027.0,404.7 1049.9,404.7 1063.7,411.6 1079.7,413.9 1098.0,416.2 1114.0,425.3 1118.6,443.6 1116.3,456.0" fill="none" stroke="#6dc293" stroke-width="5.8" stroke-linejoin="round" stroke-linecap="round" opacity=".97"/><polyline points="1004.1,404.7 1006.4,423.0 1001.8,439.1 1001.8,456.0" fill="none" stroke="#6dc293" stroke-width="5.8" stroke-linejoin="round" stroke-linecap="round" opacity=".97"/><polyline points="1004.1,441.4 1020.1,440.2 1036.2,445.9 1049.9,456.0" fill="none" stroke="#6dc293" stroke-width="5.8" stroke-linejoin="round" stroke-linecap="round" opacity=".97"/><polyline points="1088.8,242.1 1087.7,262.7 1098.0,271.9" fill="none" stroke="#6dc293" stroke-width="5.8" stroke-linejoin="round" stroke-linecap="round" opacity=".97"/><polyline points="956.0,124.4 974.3,118.7 997.2,118.7 1020.1,116.4 1038.5,119.9 1047.6,115.3 1068.2,114.1 1086.6,116.4 1104.9,122.1 1110.6,132.5 1109.5,149.6 1106.0,165.7 1109.5,179.4 1100.3,190.8 1091.1,206.9 1084.3,225.2 1082.0,238.9 1086.6,249.0 1088.8,255.9" fill="none" stroke="#6dc293" stroke-width="5.8" stroke-linejoin="round" stroke-linecap="round" opacity=".97"/><polyline points="956.0,124.4 953.7,140.5 962.9,151.9 970.9,161.1 958.3,172.5 953.7,177.1 958.3,190.8 962.9,200.0 976.6,202.3 997.2,209.2 1008.7,213.7 1008.7,229.8 1001.8,243.5 998.4,249.0" fill="none" stroke="#6dc293" stroke-width="5.8" stroke-linejoin="round" stroke-linecap="round" opacity=".97"/><polyline points="1110.6,132.5 1123.2,142.8 1134.6,149.6" fill="none" stroke="#6dc293" stroke-width="5.8" stroke-linejoin="round" stroke-linecap="round" opacity=".97"/><polyline points="1139.2,156.5 1132.4,170.2 1127.8,190.8 1130.1,206.9 1136.9,225.2 1139.2,238.9" fill="none" stroke="#6dc293" stroke-width="5.8" stroke-linejoin="round" stroke-linecap="round" opacity=".97"/><polyline points="1165.6,42.0 1166.7,64.9 1173.6,83.2 1180.4,99.2 1182.7,117.6 1180.4,133.6 1173.6,147.3 1166.7,161.1 1165.6,179.4 1169.0,197.7 1171.3,216.0 1170.1,232.1 1166.7,249.0 1159.8,255.9" fill="none" stroke="#6dc293" stroke-width="5.8" stroke-linejoin="round" stroke-linecap="round" opacity=".97"/><polyline points="1180.4,133.6 1182.7,156.5 1186.2,179.4 1182.7,202.3 1175.9,220.6 1170.1,232.1" fill="none" stroke="#6dc293" stroke-width="5.8" stroke-linejoin="round" stroke-linecap="round" opacity=".97"/><polyline points="1170.1,232.1 1182.7,238.9 1191.9,249.0" fill="none" stroke="#6dc293" stroke-width="5.8" stroke-linejoin="round" stroke-linecap="round" opacity=".97"/><polyline points="1180.0,133.6 1202.9,151.5 1225.8,149.6 1248.7,159.9 1264.7,173.7 1287.6,173.7 1296.8,163.4 1317.4,162.2 1330.0,166.8 1332.3,188.6 1342.6,194.3 1358.6,202.3 1373.5,210.3 1379.2,197.7 1384.9,184.0 1383.8,172.5 1393.0,166.8 1406.7,163.4 1415.9,142.8 1415.9,122.1 1428.5,113.0 1439.9,110.7 1438.8,97.0 1434.2,87.8 1445.6,76.3 1459.4,60.3 1453.6,42.0" fill="none" stroke="#93d4ad" stroke-width="0.9" stroke-linejoin="round" stroke-linecap="round" opacity=".7" stroke-dasharray="3 2"/><polyline points="1384.9,184.0 1393.0,181.7 1406.7,187.4 1429.6,188.6 1438.8,192.0 1454.8,187.4 1480.0,186.3 1493.7,182.8 1509.7,179.4 1532.6,169.1 1557.8,169.1 1578.4,185.1 1599.1,185.1 1619.7,182.8 1635.7,186.3 1654.0,186.3 1670.0,186.3 1686.1,182.8 1699.8,181.7 1709.0,177.1 1720.4,176.0 1733.0,179.4" fill="none" stroke="#93d4ad" stroke-width="0.9" stroke-linejoin="round" stroke-linecap="round" opacity=".7" stroke-dasharray="3 2"/><polyline points="1342.6,197.7 1338.0,216.0 1348.3,225.2 1344.9,232.1 1333.4,234.4 1331.6,241.7 1333.4,249.0" fill="none" stroke="#93d4ad" stroke-width="0.9" stroke-linejoin="round" stroke-linecap="round" opacity=".7" stroke-dasharray="3 2"/><polyline points="1170.8,190.8 1180.0,192.0 1200.6,200.0 1218.9,205.7 1232.7,213.7 1246.4,219.5 1260.1,217.2 1269.3,234.4 1280.8,249.0 1299.1,252.4 1317.4,255.9 1328.8,267.3 1344.9,278.8 1354.0,284.5 1370.1,285.6 1386.1,290.2 1409.0,290.2 1409.0,281.1 1422.7,265.0 1480.0,265.0 1509.7,267.3 1537.2,266.2 1569.3,265.0 1580.7,254.7 1592.2,249.0 1612.8,235.3 1626.5,223.8 1640.3,212.4 1654.0,198.6 1670.0,185.1" fill="none" stroke="#93d4ad" stroke-width="0.9" stroke-linejoin="round" stroke-linecap="round" opacity=".7" stroke-dasharray="3 2"/><polyline points="1168.6,248.1 1180.0,236.6 1191.4,225.2 1207.5,212.6" fill="none" stroke="#93d4ad" stroke-width="0.9" stroke-linejoin="round" stroke-linecap="round" opacity=".7" stroke-dasharray="3 2"/><polyline points="1182.3,170.2 1191.4,158.8 1202.9,151.5" fill="none" stroke="#93d4ad" stroke-width="0.9" stroke-linejoin="round" stroke-linecap="round" opacity=".7" stroke-dasharray="3 2"/><polyline points="1333.4,249.0 1338.0,262.7 1344.9,278.8" fill="none" stroke="#93d4ad" stroke-width="0.9" stroke-linejoin="round" stroke-linecap="round" opacity=".7" stroke-dasharray="3 2"/><polyline points="1354.0,284.5 1363.2,297.1 1370.1,308.5 1365.5,322.3 1356.3,331.4 1351.7,337.2 1356.3,349.8 1363.2,361.2 1372.4,370.4 1386.1,377.2 1406.7,384.1 1418.1,391.0 1429.6,399.0 1450.2,391.0 1466.2,392.1 1480.0,395.6 1497.2,393.3" fill="none" stroke="#93d4ad" stroke-width="0.9" stroke-linejoin="round" stroke-linecap="round" opacity=".7" stroke-dasharray="3 2"/><polyline points="1180.0,355.5 1193.7,348.6 1209.8,350.9 1225.8,349.8 1235.0,339.5 1245.3,328.0 1257.9,337.2 1269.3,332.6 1285.3,334.9 1296.8,329.1 1308.2,326.9 1325.4,318.8 1335.7,323.4 1344.9,334.9 1351.7,337.2" fill="none" stroke="#93d4ad" stroke-width="0.9" stroke-linejoin="round" stroke-linecap="round" opacity=".7" stroke-dasharray="3 2"/><polyline points="1363.2,361.2 1372.4,373.8 1367.8,386.4 1356.3,400.1 1349.5,413.9 1340.3,427.6 1335.7,441.4 1324.3,456.0" fill="none" stroke="#93d4ad" stroke-width="0.9" stroke-linejoin="round" stroke-linecap="round" opacity=".7" stroke-dasharray="3 2"/><polyline points="1617.4,42.0 1622.0,51.2 1624.3,64.9 1628.8,78.6 1640.3,85.5 1641.4,101.5 1649.5,113.0 1651.7,124.4 1663.2,135.9 1670.1,149.6 1671.2,165.7 1671.2,184.0" fill="none" stroke="#93d4ad" stroke-width="0.9" stroke-linejoin="round" stroke-linecap="round" opacity=".7" stroke-dasharray="3 2"/><polyline points="1674.6,165.7 1676.9,145.0 1676.9,119.9 1681.5,114.1 1690.7,113.0 1706.7,102.7 1720.4,101.5 1729.6,106.1 1741.0,99.2 1745.6,91.2 1759.4,87.8" fill="none" stroke="#93d4ad" stroke-width="0.9" stroke-linejoin="round" stroke-linecap="round" opacity=".7" stroke-dasharray="3 2"/><polyline points="1775.4,42.0 1766.2,55.7 1760.5,71.8 1759.4,87.8 1754.8,101.5 1750.2,117.6 1744.5,133.6 1741.0,147.3 1735.3,161.1 1733.0,177.1 1722.7,190.8 1715.9,202.3 1712.4,213.7 1726.2,222.9 1723.9,236.6 1718.1,249.0 1721.6,258.2 1731.9,267.3 1722.7,281.1 1717.0,294.8 1712.4,308.5 1713.6,322.3 1719.3,338.3 1718.1,349.8 1711.3,361.2" fill="none" stroke="#93d4ad" stroke-width="0.9" stroke-linejoin="round" stroke-linecap="round" opacity=".7" stroke-dasharray="3 2"/><polyline points="1733.0,177.1 1743.3,184.0 1757.1,186.3 1768.5,193.1 1780.0,197.7 1800.6,200.0 1818.9,206.9 1837.2,212.6 1855.5,214.9 1873.9,221.8 1894.5,232.1 1910.5,241.2 1919.9,245.8" fill="none" stroke="#93d4ad" stroke-width="0.9" stroke-linejoin="round" stroke-linecap="round" opacity=".7" stroke-dasharray="3 2"/><polyline points="1671.2,185.1 1672.4,202.3 1674.6,225.2 1675.8,249.0 1674.6,262.7 1679.2,283.4 1674.6,298.2 1683.8,313.1 1690.7,324.6 1695.3,340.6 1706.7,352.1 1709.0,363.5" fill="none" stroke="#93d4ad" stroke-width="0.9" stroke-linejoin="round" stroke-linecap="round" opacity=".7" stroke-dasharray="3 2"/><polyline points="1569.3,265.0 1564.7,274.2 1553.3,285.6 1546.4,301.7 1530.4,315.4 1523.5,329.1 1509.8,345.2 1505.2,361.2 1500.6,377.2 1497.2,395.6" fill="none" stroke="#93d4ad" stroke-width="0.9" stroke-linejoin="round" stroke-linecap="round" opacity=".7" stroke-dasharray="3 2"/><polyline points="1780.0,355.5 1763.9,355.5 1750.2,353.2 1734.2,361.2 1722.7,363.5 1711.3,364.6 1695.3,369.2 1681.5,368.1 1667.8,362.4 1654.0,360.1 1642.6,361.2 1631.1,354.3 1622.0,349.8 1614.0,355.5 1617.4,370.4 1612.8,381.8 1603.7,387.5 1594.5,392.1 1596.8,407.0 1587.6,416.2 1576.2,420.7 1560.1,423.0 1541.8,424.2 1525.8,420.7 1516.6,423.0" fill="none" stroke="#93d4ad" stroke-width="0.9" stroke-linejoin="round" stroke-linecap="round" opacity=".7" stroke-dasharray="3 2"/><polyline points="1731.9,363.5 1734.2,374.9 1745.6,374.9 1754.8,384.1 1757.1,393.3 1768.5,397.8 1775.4,409.3 1780.0,418.5 1784.6,429.9 1793.7,436.8 1805.2,440.2 1798.3,445.9 1793.7,456.0" fill="none" stroke="#93d4ad" stroke-width="0.9" stroke-linejoin="round" stroke-linecap="round" opacity=".7" stroke-dasharray="3 2"/><polyline points="1466.3,400.1 1480.0,395.6 1497.2,393.3 1512.1,402.4 1517.8,418.5 1514.3,429.9 1502.9,439.1 1489.2,443.6 1470.8,450.5 1457.1,456.0" fill="none" stroke="#93d4ad" stroke-width="0.9" stroke-linejoin="round" stroke-linecap="round" opacity=".7" stroke-dasharray="3 2"/><polyline points="1473.1,423.0 1480.0,409.3 1489.2,400.1 1491.4,413.9 1484.6,429.9 1475.4,436.8 1470.8,456.0" fill="none" stroke="#93d4ad" stroke-width="0.9" stroke-linejoin="round" stroke-linecap="round" opacity=".7" stroke-dasharray="3 2"/><polyline points="1816.8,42.0 1828.2,59.2 1846.6,60.3 1860.3,69.5 1867.2,87.8 1874.0,106.1 1883.2,123.3 1899.2,116.4 1910.7,122.1 1920.1,125.6" fill="none" stroke="#93d4ad" stroke-width="0.9" stroke-linejoin="round" stroke-linecap="round" opacity=".7" stroke-dasharray="3 2"/><polyline points="1709.2,365.8 1722.9,363.5 1736.6,358.9 1750.4,353.2 1768.7,356.6 1782.4,355.5 1793.9,363.5 1798.5,377.2 1805.3,388.7 1813.4,397.8 1816.8,407.0 1828.2,408.1 1839.7,411.6 1855.7,408.1 1864.9,395.6 1876.3,393.3 1880.9,381.8 1894.6,372.7 1906.1,364.6 1920.1,360.1" fill="none" stroke="#93d4ad" stroke-width="0.9" stroke-linejoin="round" stroke-linecap="round" opacity=".7" stroke-dasharray="3 2"/><polyline points="998.4,249.0 1006.4,255.9 1004.1,269.6 1008.7,283.3 1022.4,285.6 1038.5,283.3 1059.1,279.9 1068.2,294.8 1075.1,304.0 1095.7,309.7 1100.3,326.9 1110.6,347.5 1109.5,370.4 1108.3,391.0 1110.6,409.3 1114.0,425.3 1120.9,441.4 1130.1,456.0" fill="none" stroke="#93d4ad" stroke-width="0.9" stroke-linejoin="round" stroke-linecap="round" opacity=".7" stroke-dasharray="3 2"/><polyline points="1059.1,279.9 1077.4,281.1 1095.7,271.9 1109.5,276.5 1130.1,270.8 1146.1,260.4 1157.5,253.6 1169.0,242.1" fill="none" stroke="#93d4ad" stroke-width="0.9" stroke-linejoin="round" stroke-linecap="round" opacity=".7" stroke-dasharray="3 2"/><polyline points="1109.5,276.5 1104.9,292.5 1098.0,309.7" fill="none" stroke="#93d4ad" stroke-width="0.9" stroke-linejoin="round" stroke-linecap="round" opacity=".7" stroke-dasharray="3 2"/><polyline points="1110.6,347.5 1130.1,352.0 1141.5,353.2 1155.3,349.8 1171.3,348.6 1180.4,354.3 1196.5,349.8 1223.9,349.8 1235.4,340.6 1244.6,329.1" fill="none" stroke="#93d4ad" stroke-width="0.9" stroke-linejoin="round" stroke-linecap="round" opacity=".7" stroke-dasharray="3 2"/><polyline points="1024.7,286.8 1025.9,301.7 1022.4,317.7 1024.7,326.9 1015.6,330.3 1006.4,340.6 1006.4,363.5 1011.0,368.1 999.5,379.5 997.2,386.4" fill="none" stroke="#93d4ad" stroke-width="0.9" stroke-linejoin="round" stroke-linecap="round" opacity=".7" stroke-dasharray="3 2"/><polyline points="1006.4,402.4 1027.0,404.7 1049.9,404.7 1063.7,411.6 1079.7,413.9 1098.0,416.2 1114.0,425.3 1118.6,443.6 1116.3,456.0" fill="none" stroke="#93d4ad" stroke-width="0.9" stroke-linejoin="round" stroke-linecap="round" opacity=".7" stroke-dasharray="3 2"/><polyline points="1004.1,404.7 1006.4,423.0 1001.8,439.1 1001.8,456.0" fill="none" stroke="#93d4ad" stroke-width="0.9" stroke-linejoin="round" stroke-linecap="round" opacity=".7" stroke-dasharray="3 2"/><polyline points="1004.1,441.4 1020.1,440.2 1036.2,445.9 1049.9,456.0" fill="none" stroke="#93d4ad" stroke-width="0.9" stroke-linejoin="round" stroke-linecap="round" opacity=".7" stroke-dasharray="3 2"/><polyline points="1088.8,242.1 1087.7,262.7 1098.0,271.9" fill="none" stroke="#93d4ad" stroke-width="0.9" stroke-linejoin="round" stroke-linecap="round" opacity=".7" stroke-dasharray="3 2"/><polyline points="956.0,124.4 974.3,118.7 997.2,118.7 1020.1,116.4 1038.5,119.9 1047.6,115.3 1068.2,114.1 1086.6,116.4 1104.9,122.1 1110.6,132.5 1109.5,149.6 1106.0,165.7 1109.5,179.4 1100.3,190.8 1091.1,206.9 1084.3,225.2 1082.0,238.9 1086.6,249.0 1088.8,255.9" fill="none" stroke="#93d4ad" stroke-width="0.9" stroke-linejoin="round" stroke-linecap="round" opacity=".7" stroke-dasharray="3 2"/><polyline points="956.0,124.4 953.7,140.5 962.9,151.9 970.9,161.1 958.3,172.5 953.7,177.1 958.3,190.8 962.9,200.0 976.6,202.3 997.2,209.2 1008.7,213.7 1008.7,229.8 1001.8,243.5 998.4,249.0" fill="none" stroke="#93d4ad" stroke-width="0.9" stroke-linejoin="round" stroke-linecap="round" opacity=".7" stroke-dasharray="3 2"/><polyline points="1110.6,132.5 1123.2,142.8 1134.6,149.6" fill="none" stroke="#93d4ad" stroke-width="0.9" stroke-linejoin="round" stroke-linecap="round" opacity=".7" stroke-dasharray="3 2"/><polyline points="1139.2,156.5 1132.4,170.2 1127.8,190.8 1130.1,206.9 1136.9,225.2 1139.2,238.9" fill="none" stroke="#93d4ad" stroke-width="0.9" stroke-linejoin="round" stroke-linecap="round" opacity=".7" stroke-dasharray="3 2"/><polyline points="1165.6,42.0 1166.7,64.9 1173.6,83.2 1180.4,99.2 1182.7,117.6 1180.4,133.6 1173.6,147.3 1166.7,161.1 1165.6,179.4 1169.0,197.7 1171.3,216.0 1170.1,232.1 1166.7,249.0 1159.8,255.9" fill="none" stroke="#93d4ad" stroke-width="0.9" stroke-linejoin="round" stroke-linecap="round" opacity=".7" stroke-dasharray="3 2"/><polyline points="1180.4,133.6 1182.7,156.5 1186.2,179.4 1182.7,202.3 1175.9,220.6 1170.1,232.1" fill="none" stroke="#93d4ad" stroke-width="0.9" stroke-linejoin="round" stroke-linecap="round" opacity=".7" stroke-dasharray="3 2"/><polyline points="1170.1,232.1 1182.7,238.9 1191.9,249.0" fill="none" stroke="#93d4ad" stroke-width="0.9" stroke-linejoin="round" stroke-linecap="round" opacity=".7" stroke-dasharray="3 2"/><polygon points="1040.8,44.3 1059.1,42.0 1064.8,58.0 1044.2,59.2" fill="none" stroke="#52c498" stroke-width="3" stroke-linejoin="round"/><polyline points="1059.1,42.0 1064.8,58.0" fill="none" stroke="#e8a04c" stroke-width="1.6" stroke-linejoin="round" stroke-linecap="round" /><polyline points="988.2,387.7 987.9,383.9 988.7,380.7 988.5,378.3 987.5,375.6 987.6,372.4 987.7,368.6 988.5,367.2 987.9,362.8 989.1,361.4 989.1,357.1 990.0,353.3 989.8,350.8 988.3,347.4 988.7,345.9 988.5,342.4 989.6,338.9 989.5,335.2 989.4,333.1 987.6,329.2 988.1,326.5 986.4,323.7 985.9,320.3 985.3,316.6 985.6,314.1 983.9,310.5 984.0,307.9 983.9,303.3 984.0,299.6 982.4,297.1 979.9,295.3 977.8,292.4 977.0,289.2 976.8,286.3 978.4,282.9 978.6,279.0 977.8,276.2 977.9,273.4 977.3,270.1 977.5,268.1 976.3,264.5 975.1,261.5 976.0,259.2 976.1,254.6 974.8,252.4 973.6,248.9 974.3,246.0 972.0,242.3 970.2,240.9 969.7,237.4 967.7,233.7 967.1,232.0 965.3,228.0 965.1,225.9 964.6,222.7 962.7,218.8 961.7,215.6 961.4,213.7 962.2,209.1 960.0,206.3 959.6,203.9 959.9,200.4 959.2,197.9 957.4,194.6 957.4,191.9 957.9,189.0 956.2,185.8 955.7,181.5 954.6,179.3 954.0,176.8 952.5,173.6 950.0,169.5 948.8,166.6 946.2,164.3 944.3,160.6 942.9,158.3 941.5,155.5 939.0,153.2 938.3,151.5 935.8,148.4 934.0,146.7 933.7,142.3 931.3,140.0 930.2,137.5 928.9,133.6 929.0,132.4 927.2,128.2 925.4,124.3 925.0,121.5 924.4,119.0 924.6,115.0 922.4,113.4 923.1,108.4 922.6,104.9 922.1,102.7 922.8,100.5 924.3,96.6 923.6,92.7 924.1,90.3 925.5,86.4 924.9,83.8 923.8,79.3 924.1,77.8 923.5,74.1 922.1,70.2 922.1,70.2 925.8,71.6 927.5,72.1 930.8,71.9 933.1,73.4 937.2,74.8 939.6,76.9 944.1,78.0 947.1,80.9 950.1,81.2 951.5,82.5 954.4,84.1 958.1,86.4 961.2,88.5 964.6,88.7 967.1,90.6 968.8,91.4 973.5,92.9 976.0,93.4 977.7,95.2 981.3,95.7 983.8,98.1 988.1,99.0 989.8,101.9 992.9,102.7 996.7,102.5 998.7,102.9 1003.7,104.9 1005.4,105.4 1010.5,105.5 1012.5,105.8 1016.1,106.2 1018.6,105.3 1023.8,106.8 1026.1,107.6 1029.2,107.7 1033.4,106.4 1035.5,106.7 1039.3,107.3 1041.9,107.9 1045.0,107.9 1047.8,109.4 1051.4,108.8 1055.0,110.2 1057.9,109.7 1061.0,110.8 1064.4,110.2 1067.7,109.3 1070.8,109.9 1074.2,110.8 1075.9,109.6 1079.0,107.1 1083.0,105.4 1084.9,103.4 1088.1,101.5 1085.9,104.5 1083.5,106.2 1085.4,108.2 1088.5,109.4 1092.4,111.8 1094.7,114.2 1097.4,115.5 1102.2,115.0 1105.4,114.7 1109.0,114.3 1106.4,115.5 1108.2,118.8 1109.9,121.3 1110.4,117.9 1111.1,114.3 1113.8,113.9 1117.1,112.4 1120.4,109.6 1122.4,109.7 1125.0,107.3 1128.1,110.0 1129.7,114.3 1127.5,111.1 1126.0,107.6 1124.6,105.5 1124.8,103.0 1122.0,99.5 1121.7,95.2 1120.9,94.0 1118.6,89.9 1119.9,88.5 1122.2,85.1 1125.3,83.5 1125.4,80.2 1128.0,77.6 1129.2,75.2 1132.2,72.2 1133.7,70.7 1135.5,68.4 1132.7,64.3 1132.0,60.9 1131.9,57.4 1130.3,55.0 1130.8,50.4 1134.9,51.1 1136.9,49.2 1141.3,49.3 1141.4,46.4 1143.6,42.3" fill="none" stroke="#1e7d36" stroke-width="2.2" stroke-linejoin="round" stroke-linecap="round" /><polygon points="977.8,276.2 980.2,276.1 983.5,276.0 987.2,274.5 988.7,276.1 992.9,275.0 994.1,278.5 996.4,283.2 1001.1,283.6 1004.2,284.0 1007.2,283.7 1010.6,285.9 1013.8,285.5 1011.5,290.1 1008.4,291.7 1005.7,291.0 1002.8,293.2 998.6,292.9 996.9,294.9 992.9,295.9 991.1,299.7 988.2,301.7 985.9,299.8 982.4,295.9 977.8,292.4 977.5,289.9 977.7,287.0 978.7,281.7 976.9,278.8" fill="none" stroke="#1e7d36" stroke-width="2.2" stroke-linejoin="round"/><polygon points="985.9,320.3 988.2,320.8 991.5,322.4 993.6,324.4 997.5,326.1 1001.3,324.9 1003.6,321.6 1005.7,320.3 1008.5,321.3 1010.3,322.5 1013.8,325.0 1010.8,328.1 1009.9,329.9 1007.5,330.5 1004.0,333.6 1002.2,335.4 1003.9,339.5 1005.4,340.8 1005.9,345.4 1006.8,348.2 1006.5,350.5 1006.0,353.4 1005.7,357.5 1003.2,360.7 998.7,362.1 1000.0,365.1 1002.0,369.3 1002.2,372.6 996.4,373.7 996.8,371.2 995.4,366.9 995.1,363.6 993.6,360.0 994.6,356.0 992.3,354.1 992.9,350.5 991.7,347.1 991.4,343.2 992.0,339.3 989.9,335.9 989.4,333.1 988.9,329.4 987.3,327.3 986.4,323.6" fill="none" stroke="#1e7d36" stroke-width="2.2" stroke-linejoin="round"/><polygon points="1134.6,116.6 1134.2,120.5 1133.9,124.2 1133.0,127.4 1130.6,129.6 1131.1,132.9 1134.2,135.6 1136.1,136.6 1137.1,139.3 1139.2,142.2 1137.4,139.9 1134.2,136.6 1132.9,135.9 1132.2,131.6 1129.6,130.0 1132.5,131.5 1134.2,133.7 1134.8,137.9 1138.1,139.3 1142.8,142.4 1147.4,145.5 1147.5,147.9 1150.1,152.6 1149.2,155.9 1150.5,157.9 1151.1,161.4 1150.8,165.1 1152.1,167.2 1149.4,169.1 1145.9,168.7 1147.6,172.1 1147.4,176.5 1148.6,178.7 1150.5,182.6 1149.9,184.7 1150.6,189.1 1151.3,191.9 1153.6,192.4 1158.3,191.9 1161.0,189.9 1164.5,188.8 1162.9,185.7 1159.8,182.6 1158.2,179.5 1157.5,176.5 1159.9,172.3 1161.4,170.3 1162.0,165.5 1160.9,163.9 1159.8,159.4 1161.8,157.0 1166.0,153.2 1166.5,149.5 1167.6,145.5 1162.9,145.5 1158.6,143.6 1156.7,143.9 1153.5,143.2 1151.0,140.8 1150.3,139.4 1146.4,136.2 1144.3,134.6 1141.8,133.8 1138.2,132.1 1136.6,130.0 1139.7,132.9 1140.2,135.1 1142.7,135.7 1146.3,139.1 1148.1,141.2 1150.8,142.2 1148.6,139.4 1145.7,136.8 1142.8,134.4 1141.5,132.9 1140.6,130.8 1137.9,125.3 1138.5,123.2 1135.7,119.3" fill="none" stroke="#1e7d36" stroke-width="2.7" stroke-linejoin="round"/><polygon points="1155.9,201.2 1157.4,205.1 1157.5,206.9 1157.1,210.9 1159.0,214.2 1159.8,216.7 1160.3,220.5 1160.8,223.6 1162.7,225.8 1162.9,229.1 1159.9,230.3 1156.7,230.7 1159.6,230.3 1164.7,229.1 1167.6,229.1 1168.7,225.7 1168.3,221.4 1167.2,217.1 1164.5,213.6 1163.0,211.2 1164.2,207.3 1162.9,204.3 1159.0,201.2" fill="none" stroke="#1e7d36" stroke-width="2.7" stroke-linejoin="round"/><polygon points="1154.4,200.5 1152.5,202.3 1151.9,204.8 1150.2,208.3 1147.7,211.3 1146.2,213.8 1145.9,216.7 1144.5,218.8 1145.1,223.7 1144.0,225.3 1144.9,230.2 1144.3,232.2 1147.6,231.6 1151.7,230.3 1154.5,230.5 1156.7,230.7 1159.0,229.0 1162.9,229.1 1161.7,226.8 1160.6,223.1 1160.9,219.5 1159.8,216.7 1158.8,212.4 1156.6,209.5 1157.0,206.8 1155.0,203.9" fill="none" stroke="#1e7d36" stroke-width="2.7" stroke-linejoin="round"/><polygon points="1138.1,150.1 1134.4,153.6 1131.9,154.8 1129.1,158.0 1127.1,159.6 1127.3,162.2 1124.2,165.6 1123.9,168.6 1122.8,171.8 1121.6,175.7 1120.7,177.4 1121.1,181.1 1116.3,181.1 1113.7,183.1 1110.3,182.6 1108.4,184.8 1106.6,190.0 1105.6,191.9 1102.6,194.9 1101.4,197.7 1099.4,200.5 1097.9,202.8 1096.3,206.2 1095.7,209.2 1092.4,211.0 1091.7,215.2 1091.2,217.7 1087.8,221.4 1087.0,222.9 1086.4,226.6 1085.5,229.1 1090.3,228.6 1093.2,229.1 1095.5,227.9 1097.5,225.6 1101.0,222.9 1103.1,222.2 1107.6,221.7 1111.1,219.4 1113.4,218.3 1113.4,220.6 1109.0,221.3 1106.2,223.7 1102.5,225.2 1098.9,228.3 1097.4,229.8 1094.8,231.4 1090.7,230.6 1086.9,230.5 1084.7,230.7 1083.4,227.4 1083.2,224.5 1084.2,222.2 1086.8,217.5 1087.0,214.4 1088.6,212.1 1090.5,210.1 1091.0,206.5 1092.7,201.6 1094.8,199.7 1097.3,196.6 1097.9,194.1 1099.9,191.3 1102.5,188.8 1104.7,186.3 1107.4,183.7 1108.5,180.9 1111.8,179.6 1111.9,176.5 1113.5,174.1 1114.9,170.3 1113.4,166.9 1111.8,162.5 1115.0,158.9 1114.8,156.5 1118.0,154.8 1117.2,158.6 1117.6,161.6 1116.5,165.6 1117.1,168.0 1116.2,172.1 1114.9,176.5 1119.6,174.9 1121.2,170.3 1122.2,168.6 1123.1,164.6 1122.6,161.0 1123.9,159.5 1126.6,154.8 1128.8,153.2 1131.7,151.4 1133.9,148.8 1136.6,147.8" fill="none" stroke="#1e7d36" stroke-width="2.7" stroke-linejoin="round"/><polygon points="1114.9,221.4 1114.4,224.5 1113.3,229.2 1112.6,231.8 1113.4,235.3 1114.8,237.9 1114.5,242.8 1114.9,246.1 1113.4,248.9 1114.6,252.2 1114.3,254.6 1113.4,258.5 1115.1,260.7 1118.0,264.7 1118.3,262.3 1118.8,258.6 1118.7,255.1 1118.3,250.6 1119.6,247.7 1119.8,245.1 1119.0,240.5 1118.4,237.7 1118.8,235.3 1119.0,232.9 1119.6,230.0 1121.1,226.0 1118.9,222.6" fill="none" stroke="#1e7d36" stroke-width="2.7" stroke-linejoin="round"/><polygon points="1136.6,224.5 1134.2,225.8 1131.6,226.8 1128.8,229.1 1128.0,233.0 1126.1,234.5 1124.2,238.4 1125.3,241.1 1125.7,245.7 1127.3,247.7 1126.9,250.2 1125.1,255.2 1122.6,258.5 1123.9,260.6 1126.2,263.6 1127.3,266.3 1131.9,266.3 1132.8,263.6 1132.7,260.1 1129.9,257.6 1128.8,253.9 1131.0,251.9 1131.2,246.6 1131.9,244.6 1129.2,240.6 1128.8,238.4 1131.4,235.3 1131.6,234.2 1133.5,230.7 1134.6,227.7" fill="none" stroke="#1e7d36" stroke-width="2.7" stroke-linejoin="round"/><polygon points="1150.6,76.0 1153.5,78.1 1157.8,79.8 1159.9,81.8 1160.5,86.1 1161.0,89.9 1155.2,89.9 1151.7,85.3 1150.6,82.2 1151.3,79.8" fill="none" stroke="#1e7d36" stroke-width="2.7" stroke-linejoin="round"/><polygon points="1156.4,95.7 1159.8,96.7 1163.3,96.9 1164.0,99.2 1162.7,103.0 1163.7,107.2 1164.5,109.7 1167.1,112.6 1168.9,115.5 1170.0,117.7 1172.2,121.5 1174.1,124.0 1177.3,125.9 1173.1,125.2 1170.5,123.4 1168.5,121.3 1164.5,121.3 1161.7,119.6 1161.0,114.9 1160.4,114.2 1156.6,110.3 1154.9,107.3 1154.0,105.0 1155.1,101.1 1156.1,97.8" fill="none" stroke="#1e7d36" stroke-width="2.7" stroke-linejoin="round"/><polygon points="1130.1,48.9 1133.0,50.5 1137.2,51.8 1139.2,53.4 1142.7,50.8 1146.1,47.7 1148.4,48.9 1152.5,50.7 1155.3,51.2 1153.9,53.7 1153.5,58.0 1154.1,60.3 1151.9,60.7 1149.9,64.5 1146.1,64.9 1145.3,68.0 1143.8,70.6 1139.9,67.6 1137.8,65.8 1134.6,64.9 1132.8,60.8 1132.4,58.0 1130.5,54.9 1130.7,52.7" fill="none" stroke="#1e7d36" stroke-width="2.6" stroke-linejoin="round"/><polyline points="1143.8,70.6 1146.0,73.5 1148.7,75.0 1149.6,78.1 1153.0,80.9 1154.8,84.7 1158.0,87.3 1159.8,90.1 1161.1,94.3 1161.3,97.6 1163.3,101.5 1164.1,105.2 1165.5,107.7 1167.1,110.2 1169.3,112.3 1171.3,115.3 1173.8,117.1 1173.7,121.9 1176.5,123.0 1178.1,126.7" fill="none" stroke="#1e7d36" stroke-width="2.4" stroke-linejoin="round" stroke-linecap="round" /><polyline points="988.0,387.7 995.0,385.0 1002.0,392.0 1011.5,394.6 1016.0,390.8 1020.8,387.7 1029.0,386.5 1030.0,391.0 1036.4,390.6 1042.4,390.9 1048.6,391.0 1051.1,395.2 1054.4,399.3 1055.6,405.0 1059.8,407.3 1065.0,409.7 1070.3,406.4 1076.5,404.0 1082.2,404.3 1088.0,404.0 1092.3,406.0 1097.4,408.6 1101.4,412.8 1105.2,416.1 1109.0,420.0 1111.4,424.2 1113.2,429.1 1114.8,434.0 1116.8,440.6 1119.5,448.0 1120.6,456.0" fill="none" stroke="#1e7d36" stroke-width="2.1" stroke-linejoin="round" stroke-linecap="round" /><polyline points="1709.0,42.0 1709.0,374.6 1709.0,374.6 1710.3,378.0 1712.3,381.8 1713.7,386.0 1714.7,390.1 1716.2,393.9 1718.3,397.8 1718.6,402.0 1719.7,407.5 1720.6,411.8 1719.6,416.1 1719.6,421.6 1719.0,425.6 1718.3,430.3 1721.2,434.4 1723.4,439.4 1725.3,444.3 1728.0,447.7 1731.3,452.5 1734.6,456.0" fill="none" stroke="#1e7d36" stroke-width="2" stroke-linejoin="round" stroke-linecap="round" /><polyline points="1720.6,430.3 1509.0,430.3 1509.0,430.3 1504.5,431.7 1501.2,432.6 1496.6,434.2 1493.0,435.0 1488.8,435.9 1483.7,436.5 1478.3,437.6 1474.5,438.1 1469.7,439.6 1465.5,440.2 1460.0,440.8 1456.5,442.8 1451.7,443.5 1446.5,444.3 1441.9,445.2 1438.7,446.0 1435.4,447.5 1430.4,449.2 1426.4,450.5 1423.0,451.0 1418.3,452.4 1413.4,453.6 1409.0,455.0 1404.1,455.4 1400.0,457.0" fill="none" stroke="#1e7d36" stroke-width="2.3" stroke-linejoin="round" stroke-linecap="round" /><polyline points="1811.0,42.0 1811.0,133.6 1811.0,133.6 1813.4,136.8 1816.6,140.5 1819.0,145.0 1822.2,147.9 1824.4,151.1 1828.2,154.2 1829.0,157.9 1830.6,161.2 1832.8,165.6 1836.1,169.6 1839.1,172.1 1843.1,175.9 1844.1,180.8 1844.7,184.2 1845.4,188.5 1844.6,191.6 1842.9,195.8 1840.8,200.0 1843.1,202.8 1846.5,206.8 1849.6,209.6 1853.4,211.4 1848.3,213.5 1844.5,215.0 1839.7,217.1 1843.5,218.3 1846.6,220.5 1851.1,222.9 1856.0,226.2 1860.3,229.7 1863.4,234.4 1867.1,238.9 1871.1,239.4 1875.6,240.9 1878.7,241.6 1883.2,242.3 1886.1,246.2 1888.9,249.0 1890.0,255.9 1895.0,259.0 1899.2,262.7 1902.2,265.9 1903.6,270.8 1906.0,274.2 1907.8,277.6 1909.9,281.3 1912.9,284.5 1916.9,287.5 1920.0,290.2" fill="none" stroke="#1e7d36" stroke-width="2" stroke-linejoin="round" stroke-linecap="round" /><polyline points="994.1,394.6 999.9,408.6 1002.2,422.5 999.9,438.8 998.7,455.9" fill="none" stroke="#1e7d36" stroke-width="1.6" stroke-linejoin="round" stroke-linecap="round" /><text x="1282" y="246" style="font-family:'DejaVu Sans',sans-serif;font-weight:bold;font-size:13px;fill:#f4651f;paint-order:stroke;stroke:#fff;stroke-width:2px;stroke-opacity:.7">Washington</text><g transform="translate(1133.3,236.7)"><polygon points="16.3,0.8 24.0,0.2 33.3,6.6 33.8,14.3 32.5,20.1 25.6,17.8 24.0,8.9 23.6,2.7" fill="#d58a30"/><polygon points="25.6,5.8 33.3,7.0 33.8,14.3 32.5,19.8 26.3,17.4" fill="#c47a26"/><polygon points="0.8,16.3 16.3,17.8 20.9,15.9 33.3,14.3 33.2,19.8 20.9,22.1 16.3,22.5 1.5,19.8" fill="#2a221c"/><polygon points="8.5,1.9 20.9,0.8 23.6,2.7 24.4,6.6 7.7,4.6" fill="#e01a1a"/><polygon points="8.9,2.9 20.1,2.4 20.9,6.0 7.7,4.9" fill="#2c4fae"/><polygon points="1.5,8.1 7.7,4.6 24.4,6.4 24.8,13.9 17.0,15.3 0.6,13.7" fill="#f01a1a"/><polygon points="20.9,2.7 24.4,3.5 24.8,17.4 21.3,16.7" fill="#c81414"/><polygon points="0.2,13.6 16.3,14.7 16.3,17.6 0.2,16.4" fill="#e9efee"/><polygon points="22.5,1.9 24.4,2.3 24.4,4.6 22.6,4.3" fill="#e8d91c"/><ellipse cx="2.5" cy="20.5" rx="1.5" ry="2.6" fill="#1c1a18"/><ellipse cx="17.2" cy="21.5" rx="2.0" ry="3.1" fill="#1c1a18"/><ellipse cx="24.2" cy="19.8" rx="1.5" ry="2.6" fill="#1c1a18"/><ellipse cx="30.4" cy="18.8" rx="1.7" ry="2.8" fill="#1c1a18"/><ellipse cx="2.2" cy="20.8" rx="0.7" ry="1.5" fill="#d9c4a4"/><ellipse cx="16.7" cy="21.8" rx="0.9" ry="1.9" fill="#d9c4a4"/></g><text x="1125" y="282" style="font-family:'DejaVu Sans',sans-serif;font-weight:bold;font-size:13.5px;fill:#f00;paint-order:stroke;stroke:#fff;stroke-width:2.500px">TK022</text><text x="1916" y="438" text-anchor="end" style="font-family:'DejaVu Sans',sans-serif;font-weight:bold;font-size:11px;fill:#222;letter-spacing:.15px">N 46° 32.1982' : W -127° 38.4403'</text></svg><div class="mbtn" style="top:16px;height:30px"><svg class="a" style="left:0;top:0" width="30" height="30" viewBox="0 0 30 30"><circle cx="12.700" cy="14" r="5.300" fill="none" stroke="#7a7a7a" stroke-width="1.200"/><path d="M16.600 17.700l4.600 4" stroke="#7a7a7a" stroke-width="1.400"/></svg></div><div class="mbtn" style="top:61px;height:30px"><svg class="a" style="left:0;top:0" width="30" height="30" viewBox="0 0 30 30"><path d="M6 15.400C9.500 9 19 9 22.500 15.400 19 21.500 9.500 21.500 6 15.400z" fill="none" stroke="#707070" stroke-width="1.100"/><circle cx="14.300" cy="14.500" r="3.200" fill="#7a7a7a"/><circle cx="13.300" cy="13.500" r="1" fill="#fff"/></svg></div><div class="mbtn" style="top:106px;height:30px"><svg class="a" style="left:0;top:0" width="30" height="30" viewBox="0 0 30 30"><path d="M6.200 11.500l4.200-1.500v11l-4.200 1.500zM12.100 10l4.200 1.500v11L12.100 21zM18 11.500l4.200-1.500v11L18 22.500z" fill="#666"/></svg></div><div class="a" style="left:41px;top:103px;width:9px;height:9px;border-radius:5px;background:#f20d1e"></div><div class="mbtn" style="top:151px;height:60px"><div class="a" style="left:0;top:30px;width:29px;height:1px;background:#d5d5d5"></div><svg class="a" style="left:9px;top:9px" width="12" height="12" viewBox="0 0 12 12"><path d="M6 0v12M0 6h12" stroke="#666" stroke-width="1.500"/></svg><svg class="a" style="left:9px;top:39px" width="12" height="12" viewBox="0 0 12 12"><path d="M0 6h12" stroke="#666" stroke-width="1.500"/></svg></div><div class="a" style="left:11px;top:369px;width:72px;height:16px;border:2px solid #0a0a0a;border-top:0;border-bottom-width:3px"></div><div class="a" style="left:11px;top:384px;width:49px;height:14px;border:2px solid #0a0a0a;border-top:0;border-bottom:0"></div><div class="a" style="left:27px;top:370px;font:bold 11px/14px 'DejaVu Sans',sans-serif;color:#222;letter-spacing:.2px">50 km</div><div class="a" style="left:18px;top:386px;font:bold 11px/14px 'DejaVu Sans',sans-serif;color:#222;letter-spacing:.2px">20 mi</div><div class="a" style="left:26px;top:221px;width:11px;height:200px;border-radius:5px 5px 0 0;background:rgba(100,100,100,.53)"></div><div class="a" style="left:23px;top:349px;width:18px;height:18px;border-radius:3px;background:#fff;box-shadow:0 0 1px rgba(0,0,0,.3)"></div><div class="a" style="left:0;top:0;width:1560px;height:440px;box-shadow:inset 2px 2px 6px rgba(0,0,0,.38)"></div></div>
<div id="tb"><svg class="a" style="left:13px;top:15px" width="13" height="11" viewBox="0 0 13 11"><path d="M6 .7L1.200 5.500 6 10.300M11.800 .7L7 5.500l4.800 4.800" fill="none" stroke="#8a8a8a" stroke-width="1.200"/></svg><svg class="a" style="left:39px;top:15px" width="8" height="11" viewBox="0 0 8 11"><path d="M6.500 .7L1.700 5.500l4.800 4.800" fill="none" stroke="#8a8a8a" stroke-width="1.200"/></svg><div class="a" style="left:60px;top:7px;width:37px;height:27px;border:1px solid #c6c6c6;border-radius:2px;background:#f0f0f0;color:#8a8a8a;text-align:center;line-height:25px">1</div><div class="t" style="left:106px">of 1</div><svg class="a" style="left:143px;top:15px" width="8" height="11" viewBox="0 0 8 11"><path d="M1.500 .7l4.800 4.800-4.800 4.800" fill="none" stroke="#8a8a8a" stroke-width="1.200"/></svg><svg class="a" style="left:163px;top:15px" width="13" height="11" viewBox="0 0 13 11"><path d="M1.200 .7L6 5.500l-4.800 4.800M7 .7l4.800 4.800L7 10.300" fill="none" stroke="#8a8a8a" stroke-width="1.200"/></svg><div class="t" style="left:187px">Items from 1 to 30 of 30</div><div class="a" style="left:339px;top:7px;width:52px;height:27px;border:1px solid #c9c9c9;border-radius:2px;color:#555;line-height:25px;padding-left:7px">50<svg class="a" style="left:34px;top:9px" width="9" height="6" viewBox="0 0 9 6"><path d="M.8 .8l3.700 3.700L8.200 .8" fill="none" stroke="#444" stroke-width="1.200"/></svg></div><div class="a" style="left:337px;top:1px;width:58px;height:37px;border:2px solid #e8303a"></div><svg class="a" style="left:393px;top:15px" width="118" height="11" viewBox="0 0 118 11"><path d="M9 5.300L116.500 4.100" stroke="#e8323c" stroke-width="1.100"/><path d="M0 5.500L10 .3v10.400z" fill="#e81d2a"/></svg><div class="v" style="left:1220px"></div><div class="v" style="left:1335px"></div><div class="v" style="left:1375px"></div><div class="v" style="left:1442px"></div><svg class="a" style="left:1232px;top:12px" width="16" height="19" viewBox="0 0 18 21"><path d="M1 .7h10l6 6v13.600H1z" fill="#fff" stroke="#e5332a" stroke-width="1.300"/><path d="M11 .7v6h6" fill="none" stroke="#e5332a" stroke-width="1.200"/><path d="M5 16.500c2.500-1.500 4-5 4.300-8.500M9.300 8c.2 2.500 1.700 5 5 6M5.500 15c2.500-1.200 5.500-1.700 8.500-1.200" fill="none" stroke="#e5332a" stroke-width="1.700" stroke-linecap="round"/><circle cx="5" cy="16.500" r="1.300" fill="#e5332a"/></svg><svg class="a" style="left:1270px;top:12px" width="16" height="19" viewBox="0 0 18 21"><path d="M1 .7h10l6 6v13.600H1z" fill="#fff" stroke="#3aa648" stroke-width="1.300"/><path d="M11 .7v6h6" fill="none" stroke="#3aa648" stroke-width="1.200"/><path d="M5.500 9.500l6 7.500M11.500 9.500l-6 7.500" stroke="#3aa648" stroke-width="1.500"/></svg><svg class="a" style="left:1308px;top:12px" width="16" height="19" viewBox="0 0 18 21"><path d="M1 .7h10l6 6v13.600H1z" fill="#fff" stroke="#555" stroke-width="1.300"/><path d="M11 .7v6h6" fill="none" stroke="#555" stroke-width="1.200"/><path d="M13 13H6" stroke="#444" stroke-width="1.600"/><path d="M4 13l4-3.200v6.400z" fill="#444"/></svg><svg class="a" style="left:1346px;top:12px" width="20" height="20" viewBox="0 0 21 20.500"><path d="M5 7V1.500h9l2 2V7" fill="#fff" stroke="#555" stroke-width="1.300"/><rect x="1" y="7" width="19" height="9.500" rx="2" fill="#fff" stroke="#555" stroke-width="1.300"/><rect x="5" y="13" width="11" height="6.500" rx="1" fill="#fff" stroke="#555" stroke-width="1.300"/><circle cx="16.500" cy="10" r="1" fill="#555"/><path d="M7 16.200h7" stroke="#555" stroke-width="1"/></svg><div class="btn" style="left:1385px;top:7px;width:48px;height:27px;line-height:24px">Clear</div><div class="a" style="left:1452px;top:5px;width:80px;height:33px;border:1px solid #c8c8c8;border-radius:4px;background:#fff;overflow:hidden"><div class="a" style="left:39px;top:0;width:40px;height:31px;background:#ebebeb;border-left:1px solid #c8c8c8"></div><svg class="a" style="left:10px;top:8px" width="19" height="15" viewBox="0 0 19 15"><path d="M.7 2.500L6.500 .8l6 2 5.800-2v11.700l-5.800 1.700-6-2-5.800 2zM6.500 .8v11.400M12.500 2.800v11.400" fill="none" stroke="#555" stroke-width="1.200" stroke-linejoin="round"/></svg><svg class="a" style="left:50px;top:8px" width="17" height="15" viewBox="0 0 17 15"><rect x=".7" y=".7" width="15.600" height="13.600" fill="none" stroke="#8c8c8c" stroke-width="1.300"/><path d="M.7 7.500h15.600" stroke="#8c8c8c" stroke-width="1.300"/></svg></div></div>
<div id="crumb"><div class="a lk" style="left:12px;top:0;line-height:33px">Unit</div><div class="a" style="left:75px;top:0;line-height:33px;color:#333">Detalization</div><svg class="a" style="left:48px;top:0" width="17" height="32" viewBox="0 0 17 32"><path d="M.5 0l15.500 16L.5 32" fill="none" stroke="#c9c9c9" stroke-width="1.200"/></svg><svg class="a" style="left:158px;top:0" width="17" height="32" viewBox="0 0 17 32"><path d="M.5 0l15.500 16L.5 32" fill="none" stroke="#c9c9c9" stroke-width="1.200"/></svg></div>
<div id="grid"><div class="r" style="top:30px"><div class="c " style="left:0px;width:38px;padding:0"><svg class="a" style="left:11px;top:5px" width="17" height="17" viewBox="0 0 17 17"><path d="M.3 0l5.600 3.200L.3 6.400z" fill="#555"/><path d="M6.500 3.200h4.700a2.700 2.700 0 0 1 0 5.400H4.700a2.700 2.700 0 0 0 0 5.400h4.800" fill="none" stroke="#555" stroke-width="1.500"/><rect x="10.400" y="11.800" width="4.200" height="4.200" fill="#555"/></svg></div><div class="c " style="left:38px;width:48px;padding:0"><svg class="a" style="left:11px;top:9px" width="11" height="10" viewBox="0 0 11 10"><rect x=".7" y=".7" width="9.600" height="8.600" rx="1" fill="#fff" stroke="#3a87b8" stroke-width="1.400"/><path d="M5.500 2.300v5.400M2.800 5h5.400" stroke="#454545" stroke-width="1.100"/></svg></div><div class="c " style="left:86px;width:42px">1</div><div class="c " style="left:128px;width:80px">38TJ</div><div class="c lk" style="left:208px;width:145px">2022-05-02 04:35:29</div><div class="c lk" style="left:353px;width:376px">106 Middle Country Rd, Middle Island, NY 11953, USA</div><div class="c lk" style="left:729px;width:145px">2022-05-20 16:57:47</div><div class="c lk" style="left:874px;width:376px">106 Middle Country Rd, Middle Island, NY 11953, USA</div><div class="c " style="left:1250px;width:135px">5 days 20:29:32</div><div class="c " style="left:1385px;width:83px">4142 mi</div></div><div class="r" style="top:59px"><div class="c " style="left:0px;width:38px;padding:0"><svg class="a" style="left:11px;top:5px" width="17" height="17" viewBox="0 0 17 17"><path d="M.3 0l5.600 3.200L.3 6.400z" fill="#555"/><path d="M6.500 3.200h4.700a2.700 2.700 0 0 1 0 5.400H4.700a2.700 2.700 0 0 0 0 5.400h4.800" fill="none" stroke="#555" stroke-width="1.500"/><rect x="10.400" y="11.800" width="4.200" height="4.200" fill="#555"/></svg></div><div class="c " style="left:38px;width:48px;padding:0"><svg class="a" style="left:11px;top:9px" width="11" height="10" viewBox="0 0 11 10"><rect x=".7" y=".7" width="9.600" height="8.600" rx="1" fill="#fff" stroke="#3a87b8" stroke-width="1.400"/><path d="M5.500 2.300v5.400M2.800 5h5.400" stroke="#454545" stroke-width="1.100"/></svg></div><div class="c " style="left:86px;width:42px">2</div><div class="c " style="left:128px;width:80px">47MS</div><div class="c lk" style="left:208px;width:145px">2022-05-03 04:10:52</div><div class="c lk" style="left:353px;width:376px">106 Middle Country Rd, Middle Island, NY 11953, USA</div><div class="c lk" style="left:729px;width:145px">2022-05-20 16:15:10</div><div class="c lk" style="left:874px;width:376px">106 Middle Country Rd, Middle Island, NY 11953, USA</div><div class="c " style="left:1250px;width:135px">6 days 10:34:36</div><div class="c " style="left:1385px;width:83px">5509 mi</div></div><div class="r" style="top:88px"><div class="c " style="left:0px;width:38px;padding:0"><svg class="a" style="left:11px;top:5px" width="17" height="17" viewBox="0 0 17 17"><path d="M.3 0l5.600 3.200L.3 6.400z" fill="#555"/><path d="M6.500 3.200h4.700a2.700 2.700 0 0 1 0 5.400H4.700a2.700 2.700 0 0 0 0 5.400h4.800" fill="none" stroke="#555" stroke-width="1.500"/><rect x="10.400" y="11.800" width="4.200" height="4.200" fill="#555"/></svg></div><div class="c " style="left:38px;width:48px;padding:0"><svg class="a" style="left:11px;top:9px" width="11" height="10" viewBox="0 0 11 10"><rect x=".7" y=".7" width="9.600" height="8.600" rx="1" fill="#fff" stroke="#3a87b8" stroke-width="1.400"/><path d="M5.500 2.300v5.400M2.800 5h5.400" stroke="#454545" stroke-width="1.100"/></svg></div><div class="c " style="left:86px;width:42px">3</div><div class="c " style="left:128px;width:80px">50TM</div><div class="c lk" style="left:208px;width:145px">2022-05-06 09:01:07</div><div class="c lk" style="left:353px;width:376px">106 Middle Country Rd, Middle Island, NY 11953, USA</div><div class="c lk" style="left:729px;width:145px">2022-05-17 15:31:39</div><div class="c lk" style="left:874px;width:376px">106 Middle Country Rd, Middle Island, NY 11953, USA</div><div class="c " style="left:1250px;width:135px">0:24:30</div><div class="c " style="left:1385px;width:83px">0.21 mi</div></div><div class="r" style="top:117px"><div class="c " style="left:0px;width:38px;padding:0"><svg class="a" style="left:11px;top:5px" width="17" height="17" viewBox="0 0 17 17"><path d="M.3 0l5.600 3.200L.3 6.400z" fill="#555"/><path d="M6.500 3.200h4.700a2.700 2.700 0 0 1 0 5.400H4.700a2.700 2.700 0 0 0 0 5.400h4.800" fill="none" stroke="#555" stroke-width="1.500"/><rect x="10.400" y="11.800" width="4.200" height="4.200" fill="#555"/></svg></div><div class="c " style="left:38px;width:48px;padding:0"><svg class="a" style="left:11px;top:9px" width="11" height="10" viewBox="0 0 11 10"><rect x=".7" y=".7" width="9.600" height="8.600" rx="1" fill="#fff" stroke="#3a87b8" stroke-width="1.400"/><path d="M5.500 2.300v5.400M2.800 5h5.400" stroke="#454545" stroke-width="1.100"/></svg></div><div class="c " style="left:86px;width:42px">4</div><div class="c " style="left:128px;width:80px">0051</div><div class="c lk" style="left:208px;width:145px">2022-05-02 07:49:06</div><div class="c lk" style="left:353px;width:376px">Bethpage Sweet Hollow Rd, Old Bethpage, NY 11804, USA</div><div class="c lk" style="left:729px;width:145px">2022-05-20 16:04:38</div><div class="c lk" style="left:874px;width:376px">Bethpage Sweet Hollow Rd, Old Bethpage, NY 11804, USA</div><div class="c " style="left:1250px;width:135px">1 days 15:20:08</div><div class="c " style="left:1385px;width:83px">1327 mi</div></div><div class="r" style="top:146px"><div class="c " style="left:0px;width:38px;padding:0"><svg class="a" style="left:11px;top:5px" width="17" height="17" viewBox="0 0 17 17"><path d="M.3 0l5.600 3.200L.3 6.400z" fill="#555"/><path d="M6.500 3.200h4.700a2.700 2.700 0 0 1 0 5.400H4.700a2.700 2.700 0 0 0 0 5.400h4.800" fill="none" stroke="#555" stroke-width="1.500"/><rect x="10.400" y="11.800" width="4.200" height="4.200" fill="#555"/></svg></div><div class="c " style="left:38px;width:48px;padding:0"><svg class="a" style="left:11px;top:9px" width="11" height="10" viewBox="0 0 11 10"><rect x=".7" y=".7" width="9.600" height="8.600" rx="1" fill="#fff" stroke="#3a87b8" stroke-width="1.400"/><path d="M5.500 2.300v5.400M2.800 5h5.400" stroke="#454545" stroke-width="1.100"/></svg></div><div class="c " style="left:86px;width:42px">5</div><div class="c " style="left:128px;width:80px">60AW</div><div class="c lk" style="left:208px;width:145px">2022-05-02 03:07:54</div><div class="c lk" style="left:353px;width:376px">Middle Country Rd, Coram, NY 11727, USA</div><div class="c lk" style="left:729px;width:145px">2022-05-20 18:53:06</div><div class="c lk" style="left:874px;width:376px">106 Middle Country Rd, Middle Island, NY 11953, USA</div><div class="c " style="left:1250px;width:135px">5 days 21:43:53</div><div class="c " style="left:1385px;width:83px">4669 mi</div></div><div class="r" style="top:175px"><div class="c " style="left:0px;width:38px;padding:0"><svg class="a" style="left:11px;top:5px" width="17" height="17" viewBox="0 0 17 17"><path d="M.3 0l5.600 3.200L.3 6.400z" fill="#555"/><path d="M6.500 3.200h4.700a2.700 2.700 0 0 1 0 5.400H4.700a2.700 2.700 0 0 0 0 5.400h4.800" fill="none" stroke="#555" stroke-width="1.500"/><rect x="10.400" y="11.800" width="4.200" height="4.200" fill="#555"/></svg></div><div class="c " style="left:38px;width:48px;padding:0"><svg class="a" style="left:11px;top:9px" width="11" height="10" viewBox="0 0 11 10"><rect x=".7" y=".7" width="9.600" height="8.600" rx="1" fill="#fff" stroke="#3a87b8" stroke-width="1.400"/><path d="M5.500 2.300v5.400M2.800 5h5.400" stroke="#454545" stroke-width="1.100"/></svg></div><div class="c " style="left:86px;width:42px">6</div><div class="c " style="left:128px;width:80px">62JN</div><div class="c lk" style="left:208px;width:145px">2022-05-02 04:00:07</div><div class="c lk" style="left:353px;width:376px">3 Middle Country Rd, Middle Island, NY 11953, USA</div><div class="c lk" style="left:729px;width:145px">2022-05-16 08:05:00</div><div class="c lk" style="left:874px;width:376px">I-495, Roslyn Heights, NY 11577, USA</div><div class="c " style="left:1250px;width:135px">4 days 22:30:11</div><div class="c " style="left:1385px;width:83px">3721 mi</div></div><div class="r" style="top:204px"><div class="c " style="left:0px;width:38px;padding:0"><svg class="a" style="left:11px;top:5px" width="17" height="17" viewBox="0 0 17 17"><path d="M.3 0l5.600 3.200L.3 6.400z" fill="#555"/><path d="M6.500 3.200h4.700a2.700 2.700 0 0 1 0 5.400H4.700a2.700 2.700 0 0 0 0 5.400h4.800" fill="none" stroke="#555" stroke-width="1.500"/><rect x="10.400" y="11.800" width="4.200" height="4.200" fill="#555"/></svg></div><div class="c " style="left:38px;width:48px;padding:0"><svg class="a" style="left:11px;top:9px" width="11" height="10" viewBox="0 0 11 10"><rect x=".7" y=".7" width="9.600" height="8.600" rx="1" fill="#fff" stroke="#3a87b8" stroke-width="1.400"/><path d="M5.500 2.300v5.400M2.800 5h5.400" stroke="#454545" stroke-width="1.100"/></svg></div><div class="c " style="left:86px;width:42px">7</div><div class="c " style="left:128px;width:80px">0063</div><div class="c lk" style="left:208px;width:145px">2022-05-02 00:15:11</div><div class="c lk" style="left:353px;width:376px">106 Middle Country Rd, Middle Island, NY 11953, USA</div><div class="c lk" style="left:729px;width:145px">2022-05-20 16:05:09</div><div class="c lk" style="left:874px;width:376px">S Bicycle Path, Farmingville, NY 11738, USA</div><div class="c " style="left:1250px;width:135px">5 days 16:45:20</div><div class="c " style="left:1385px;width:83px">4305 mi</div></div><div class="r" style="top:233px"><div class="c " style="left:0px;width:38px;padding:0"><svg class="a" style="left:11px;top:5px" width="17" height="17" viewBox="0 0 17 17"><path d="M.3 0l5.600 3.200L.3 6.400z" fill="#555"/><path d="M6.500 3.200h4.700a2.700 2.700 0 0 1 0 5.400H4.700a2.700 2.700 0 0 0 0 5.400h4.800" fill="none" stroke="#555" stroke-width="1.500"/><rect x="10.400" y="11.800" width="4.200" height="4.200" fill="#555"/></svg></div><div class="c " style="left:38px;width:48px;padding:0"><svg class="a" style="left:11px;top:9px" width="11" height="10" viewBox="0 0 11 10"><rect x=".7" y=".7" width="9.600" height="8.600" rx="1" fill="#fff" stroke="#3a87b8" stroke-width="1.400"/><path d="M5.500 2.300v5.400M2.800 5h5.400" stroke="#454545" stroke-width="1.100"/></svg></div><div class="c " style="left:86px;width:42px">8</div><div class="c " style="left:128px;width:80px">64JM</div><div class="c lk" style="left:208px;width:145px">2022-05-02 03:55:15</div><div class="c lk" style="left:353px;width:376px">106 Middle Country Rd, Middle Island, NY 11953, USA</div><div class="c lk" style="left:729px;width:145px">2022-05-20 06:10:14</div><div class="c lk" style="left:874px;width:376px">106 Middle Country Rd, Middle Island, NY 11953, USA</div><div class="c " style="left:1250px;width:135px">5 days 16:53:43</div><div class="c " style="left:1385px;width:83px">4101 mi</div></div><div class="r" style="top:262px"><div class="c " style="left:0px;width:38px;padding:0"><svg class="a" style="left:11px;top:5px" width="17" height="17" viewBox="0 0 17 17"><path d="M.3 0l5.600 3.200L.3 6.400z" fill="#555"/><path d="M6.500 3.200h4.700a2.700 2.700 0 0 1 0 5.400H4.700a2.700 2.700 0 0 0 0 5.400h4.800" fill="none" stroke="#555" stroke-width="1.500"/><rect x="10.400" y="11.800" width="4.200" height="4.200" fill="#555"/></svg></div><div class="c " style="left:38px;width:48px;padding:0"><svg class="a" style="left:11px;top:9px" width="11" height="10" viewBox="0 0 11 10"><rect x=".7" y=".7" width="9.600" height="8.600" rx="1" fill="#fff" stroke="#3a87b8" stroke-width="1.400"/><path d="M5.500 2.300v5.400M2.800 5h5.400" stroke="#454545" stroke-width="1.100"/></svg></div><div class="c " style="left:86px;width:42px">9</div><div class="c " style="left:128px;width:80px">66JD</div><div class="c lk" style="left:208px;width:145px">2022-05-02 04:47:25</div><div class="c lk" style="left:353px;width:376px">106 Middle Country Rd, Middle Island, NY 11953, USA</div><div class="c lk" style="left:729px;width:145px">2022-05-20 15:03:03</div><div class="c lk" style="left:874px;width:376px">106 Middle Country Rd, Middle Island, NY 11953, USA</div><div class="c " style="left:1250px;width:135px">6 days 0:02:52</div><div class="c " style="left:1385px;width:83px">4295 mi</div></div><div class="r" style="top:291px"><div class="c " style="left:0px;width:38px;padding:0"><svg class="a" style="left:11px;top:5px" width="17" height="17" viewBox="0 0 17 17"><path d="M.3 0l5.600 3.200L.3 6.400z" fill="#555"/><path d="M6.500 3.200h4.700a2.700 2.700 0 0 1 0 5.400H4.700a2.700 2.700 0 0 0 0 5.400h4.800" fill="none" stroke="#555" stroke-width="1.500"/><rect x="10.400" y="11.800" width="4.200" height="4.200" fill="#555"/></svg></div><div class="c " style="left:38px;width:48px;padding:0"><svg class="a" style="left:11px;top:9px" width="11" height="10" viewBox="0 0 11 10"><rect x=".7" y=".7" width="9.600" height="8.600" rx="1" fill="#fff" stroke="#3a87b8" stroke-width="1.400"/><path d="M5.500 2.300v5.400M2.800 5h5.400" stroke="#454545" stroke-width="1.100"/></svg></div><div class="c " style="left:86px;width:42px">10</div><div class="c " style="left:128px;width:80px">67ND</div><div class="c lk" style="left:208px;width:145px">2022-05-02 05:08:03</div><div class="c lk" style="left:353px;width:376px">106 Middle Country Rd, Middle Island, NY 11953, USA</div><div class="c lk" style="left:729px;width:145px">2022-05-20 15:37:25</div><div class="c lk" style="left:874px;width:376px">106 Middle Country Rd, Middle Island, NY 11953, USA</div><div class="c " style="left:1250px;width:135px">6 days 7:45:26</div><div class="c " style="left:1385px;width:83px">5003 mi</div></div><div class="hd"><div class="c " style="left:0px;width:38px"></div><div class="c " style="left:38px;width:48px"></div><div class="c " style="left:86px;width:42px">№</div><div class="c " style="left:128px;width:80px">Grouping</div><div class="c " style="left:208px;width:145px">Beginning</div><div class="c " style="left:353px;width:376px">Initial location</div><div class="c " style="left:729px;width:145px">End</div><div class="c " style="left:874px;width:376px">Final location</div><div class="c " style="left:1250px;width:135px">Duration</div><div class="c " style="left:1385px;width:83px">Mileage</div></div><div class="ft"><div class="c " style="left:0px;width:38px"></div><div class="c " style="left:38px;width:48px"></div><div class="c " style="left:86px;width:42px">-----</div><div class="c " style="left:128px;width:80px">Total</div><div class="c " style="left:208px;width:145px">-----</div><div class="c " style="left:353px;width:376px">-----</div><div class="c " style="left:729px;width:145px">-----</div><div class="c " style="left:874px;width:376px">-----</div><div class="c " style="left:1250px;width:135px">148 days 19:37:02</div><div class="c " style="left:1385px;width:83px">115394 mi</div></div><div class="a" style="left:1518px;top:30px;width:21px;height:282px;background:#f1f1f1"></div><div class="a" style="left:1520px;top:51px;width:17px;height:78px;background:#c1c1c1"></div><svg class="a" style="left:1523px;top:38px" width="10" height="6" viewBox="0 0 10 6"><path d="M0 6l5-5.500L10 6z" fill="#a3a3a3"/></svg><svg class="a" style="left:1523px;top:298px" width="10" height="6" viewBox="0 0 10 6"><path d="M0 0l5 5.500L10 0z" fill="#505050"/></svg></div>
<div id="foot"><div class="a" style="left:10px;top:9px;width:18px;height:16px;border:1.500px solid #fff;border-left-width:5px"></div><svg class="a" style="left:47px;top:9px" width="16" height="16" viewBox="0 0 16 16"><rect x="0" y="0" width="4.700" height="4.700" fill="#fff"/><rect x="0" y="5.6" width="4.700" height="4.700" fill="#fff"/><rect x="0" y="11.2" width="4.700" height="4.700" fill="#fff"/><rect x="5.6" y="0" width="4.700" height="4.700" fill="#fff"/><rect x="5.6" y="5.6" width="4.700" height="4.700" fill="#fff"/><rect x="5.6" y="11.2" width="4.700" height="4.700" fill="#fff"/><rect x="11.2" y="0" width="4.700" height="4.700" fill="#fff"/><rect x="11.2" y="5.6" width="4.700" height="4.700" fill="#fff"/><rect x="11.2" y="11.2" width="4.700" height="4.700" fill="#fff"/></svg><div class="a" style="left:758px;top:0;line-height:34px">© Dump Truck Dispatcher</div><svg class="a" style="left:1617px;top:9px" width="20" height="16" viewBox="0 0 20 16"><rect width="20" height="16" fill="#c6c6c6"/><path d="M0 4.500h20" stroke="#afafaf" stroke-width="1"/><path d="M3 8h13M3 11h9" stroke="#afafaf" stroke-width="1.300"/></svg><svg class="a" style="left:1662px;top:9px" width="27" height="16" viewBox="0 0 27 16"><path d="M0 0h20v12H0z" fill="#c6c6c6"/><path d="M0 0l10 7 10-7" fill="none" stroke="#afafaf" stroke-width="1.300"/><path d="M13 10h7v-3l6 4.500-6 4.500v-3h-7z" fill="#c6c6c6" stroke="#afafaf" stroke-width=".8"/></svg><svg class="a" style="left:1710px;top:9px" width="20" height="16" viewBox="0 0 20 16"><rect width="20" height="16" fill="#c6c6c6"/><path d="M2 14l5-6 3 3.500 3-2.500 5 5z" fill="#afafaf"/><circle cx="13.500" cy="4.500" r="1.700" fill="#afafaf"/></svg><svg class="a" style="left:1755px;top:10px" width="23" height="13" viewBox="0 0 23 13"><rect width="23" height="13" fill="#fff"/><path d="M10.500 0v13" stroke="#afafaf" stroke-width="1"/><path d="M2 4h6M2 7.500h6" stroke="#afafaf" stroke-width="1.200"/></svg><div class="a" style="left:1804px;top:0;line-height:34px">12:54:59 pm (-04)</div></div>
</body>
</html>
